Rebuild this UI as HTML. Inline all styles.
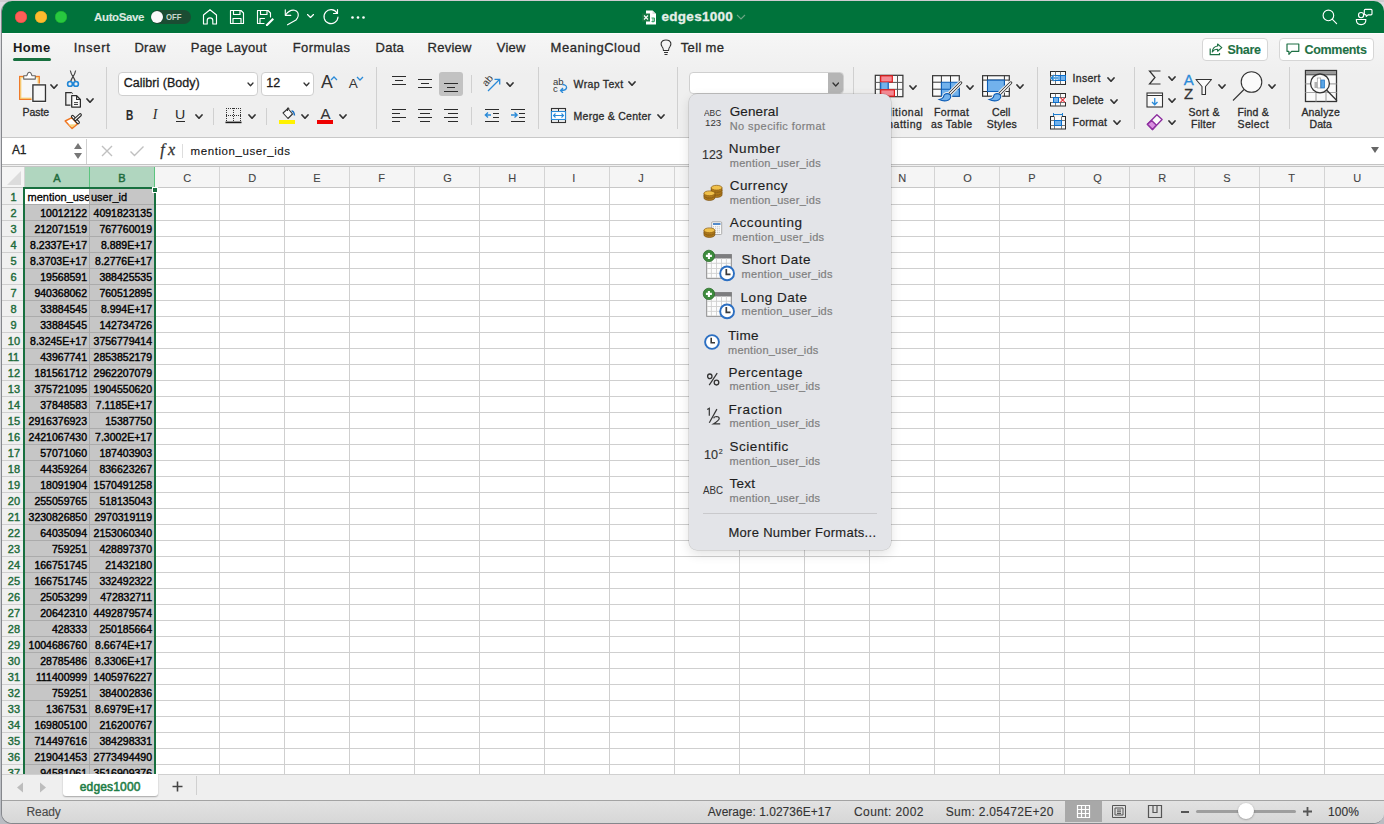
<!DOCTYPE html><html><head><meta charset='utf-8'><style>
*{margin:0;padding:0;box-sizing:border-box}
html,body{width:1384px;height:824px;overflow:hidden;background:#dedee0;font-family:"Liberation Sans",sans-serif}
.a{position:absolute}
.t{position:absolute;white-space:nowrap;line-height:1;-webkit-text-stroke:0.3px currentColor}

#win{position:absolute;left:0;top:0;width:1384px;height:824px;clip-path:inset(1px 0 1px 2px round 10px);background:#f0f0f0;border:none}
</style></head><body>
<div class='a' style='left:0;top:0;width:1384px;height:824px;background:linear-gradient(#dcdce0 0%,#d6d7db 60%,#b9bcc2 100%)'></div>
<div class='a' style='left:0;top:0;width:1384px;height:2px;background:#cfccd0'></div>
<div class='a' style='left:0;top:0;width:1384px;height:824px;clip-path:inset(1px 0 0 1px round 11px);background:#85878c'></div>

<div id='win'>

<div class='a' style='left:0;top:0;width:1384px;height:33px;background:#00733b'></div>
<div class='a' style='left:15px;top:11px;width:12px;height:12px;border-radius:6px;background:#fe5f57;box-shadow:inset 0 0 0 0.5px #e0443e'></div>
<div class='a' style='left:35px;top:11px;width:12px;height:12px;border-radius:6px;background:#febc2e;box-shadow:inset 0 0 0 0.5px #dea123'></div>
<div class='a' style='left:55px;top:11px;width:12px;height:12px;border-radius:6px;background:#28c840;box-shadow:inset 0 0 0 0.5px #1aab29'></div>
<div class='t' style='left:94.10px;top:11.86px;font-size:11.5px;font-weight:bold;font-style:normal;color:#dce9e0;font-family:"Liberation Sans",sans-serif;letter-spacing:-0.392px;-webkit-text-stroke:0.1px currentColor;'>AutoSave</div>
<div class='a' style='left:150.5px;top:10px;width:40px;height:14px;border-radius:7px;background:#1b4d33'></div>
<div class='a' style='left:151px;top:11px;width:12px;height:12px;border-radius:6px;background:#fafafa;box-shadow:0 0 1px rgba(0,0,0,.5)'></div>
<div class='t' style='left:166.00px;top:13.10px;font-size:8.5px;font-weight:bold;font-style:normal;color:#c9d6cd;font-family:"Liberation Sans",sans-serif;letter-spacing:0.000px;transform:scaleX(0.9165);transform-origin:0.00px 0;-webkit-text-stroke:0px currentColor;'>OFF</div>
<svg class='a' style='left:200px;top:7px' width='20' height='20' viewBox='0 0 20 20'><path d='M3.5 17 V8 L10 2.7 L16.5 8 V17 H12.8 V13.5 Q12.8 10.8 10 10.8 Q7.2 10.8 7.2 13.5 V17 Z' fill="none" stroke="#fff" stroke-width="1.15" stroke-linecap="round" stroke-linejoin="round"/></svg>
<svg class='a' style='left:228px;top:8px' width='18' height='18' viewBox='0 0 18 18'><path d='M2.5 2.5 H13 L15.5 5 V15.5 H2.5 Z M5.5 2.5 V6.5 H12 V2.5 M5 15.5 V10.5 H13 V15.5' fill="none" stroke="#fff" stroke-width="1.15" stroke-linecap="round" stroke-linejoin="round"/></svg>
<svg class='a' style='left:255px;top:8px' width='20' height='18' viewBox='0 0 20 18'><path d='M2.5 2.5 H13 L15.5 5 V9 M9 15.5 H2.5 V2.5 M5.5 2.5 V6.5 H12 V2.5 M5 15.5 V10.5 H9.5' fill="none" stroke="#fff" stroke-width="1.15" stroke-linecap="round" stroke-linejoin="round"/><path d='M11 16.5 L17.5 10 L19 11.5 L12.5 18 H11 Z' fill='#fff'/></svg>
<svg class='a' style='left:282px;top:7px' width='20' height='20' viewBox='0 0 20 20'><path d='M3.3 2.7 V8.3 H8.8' fill="none" stroke="#fff" stroke-width="1.15" stroke-linecap="round" stroke-linejoin="round"/><path d='M3.6 8 Q7.5 2.5 12.5 3.3 Q16.8 4.3 16.2 9 Q15.8 11 14 13 L5.5 17.8' fill="none" stroke="#fff" stroke-width="1.15" stroke-linecap="round" stroke-linejoin="round"/></svg>
<svg class='a' style='left:306px;top:13px' width='9' height='7' viewBox='0 0 9 7'><path d='M1.5 1.5 L4.5 4.5 L7.5 1.5' fill="none" stroke="#fff" stroke-width="1.15" stroke-linecap="round" stroke-linejoin="round"/></svg>
<svg class='a' style='left:321px;top:7px' width='20' height='20' viewBox='0 0 20 20'><path d='M16 6 A7 7 0 1 0 17 10 M16.5 2.5 V6.5 H12.5' fill="none" stroke="#fff" stroke-width="1.15" stroke-linecap="round" stroke-linejoin="round"/></svg>
<svg class='a' style='left:350px;top:15px' width='16' height='5' viewBox='0 0 16 5'><circle cx='2.5' cy='2.5' r='1.3' fill='#fff'/><circle cx='8' cy='2.5' r='1.3' fill='#fff'/><circle cx='13.5' cy='2.5' r='1.3' fill='#fff'/></svg>
<svg class='a' style='left:642px;top:10px' width='16' height='15' viewBox='0 0 16 15'><path d='M4 0.5 H10.5 L14 4 V14.5 H4 Z' fill='#fff'/><path d='M10.5 0.5 V4 H14' fill='#ddd'/><rect x='0' y='3.5' width='8' height='8' fill='#1a7a45'/><path d='M2 5.5 L6 9.5 M6 5.5 L2 9.5' stroke='#fff' stroke-width='1.1'/><path d='M9.5 8 H12.5 V11.5 H9.5 M11 8 V12.5' stroke='#3aa66a' stroke-width='1' fill='none'/></svg>
<div class='t' style='left:661.50px;top:10.27px;font-size:13.5px;font-weight:bold;font-style:normal;color:#e6efe9;font-family:"Liberation Sans",sans-serif;letter-spacing:0.282px;'>edges1000</div>
<svg class='a' style='left:736px;top:14px' width='10' height='6' viewBox='0 0 10 6'><path d='M1 1 L5 5 L9 1' fill='none' stroke='#6aa583' stroke-width='1.1'/></svg>
<svg class='a' style='left:1320px;top:7px' width='20' height='20' viewBox='0 0 20 20'><circle cx='8.4' cy='8.4' r='5.3' fill="none" stroke="#fff" stroke-width="1.15" stroke-linecap="round" stroke-linejoin="round"/><path d='M12.2 12.2 L16.6 16.6' fill="none" stroke="#fff" stroke-width="1.15" stroke-linecap="round" stroke-linejoin="round"/></svg>
<svg class='a' style='left:1352px;top:7px' width='24' height='20' viewBox='0 0 24 20'><circle cx='9.1' cy='8.1' r='2.6' fill="none" stroke="#fff" stroke-width="1.15" stroke-linecap="round" stroke-linejoin="round"/><path d='M4.3 12.5 H13.9 Q13.9 17.6 9.1 17.6 Q4.3 17.6 4.3 12.5 Z' fill="none" stroke="#fff" stroke-width="1.15" stroke-linecap="round" stroke-linejoin="round"/><path d='M13.3 2.3 H19 Q20 2.3 20 3.3 V6.8 Q20 7.8 19 7.8 H16 L14.3 9.4 L14 7.8 Q12.3 7.8 12.3 6.8 V3.3 Q12.3 2.3 13.3 2.3 Z' fill="none" stroke="#fff" stroke-width="1.15" stroke-linecap="round" stroke-linejoin="round"/></svg>

<div class='a' style='left:0;top:33px;width:1384px;height:104px;background:linear-gradient(#f6f6f6,#efefef 40%,#efefef)'></div><div class='a' style='left:0;top:33px;width:1384px;height:1px;background:#fdfdfd'></div><div class='t' style='left:13.00px;top:40.99px;font-size:13px;font-weight:bold;font-style:normal;color:#1a1a1a;font-family:"Liberation Sans",sans-serif;letter-spacing:0.371px;-webkit-text-stroke:0px currentColor;'>Home</div><div class='a' style='left:13px;top:58px;width:38px;height:3px;border-radius:1.5px;background:#17703f'></div><div class='t' style='left:73.70px;top:40.99px;font-size:13px;font-weight:normal;font-style:normal;color:#2a2a2a;font-family:"Liberation Sans",sans-serif;letter-spacing:0.740px;'>Insert</div><div class='t' style='left:134.40px;top:40.99px;font-size:13px;font-weight:normal;font-style:normal;color:#2a2a2a;font-family:"Liberation Sans",sans-serif;letter-spacing:0.284px;'>Draw</div><div class='t' style='left:190.80px;top:40.99px;font-size:13px;font-weight:normal;font-style:normal;color:#2a2a2a;font-family:"Liberation Sans",sans-serif;letter-spacing:0.281px;'>Page Layout</div><div class='t' style='left:292.70px;top:40.99px;font-size:13px;font-weight:normal;font-style:normal;color:#2a2a2a;font-family:"Liberation Sans",sans-serif;letter-spacing:0.446px;'>Formulas</div><div class='t' style='left:375.50px;top:40.99px;font-size:13px;font-weight:normal;font-style:normal;color:#2a2a2a;font-family:"Liberation Sans",sans-serif;letter-spacing:0.257px;'>Data</div><div class='t' style='left:427.60px;top:40.99px;font-size:13px;font-weight:normal;font-style:normal;color:#2a2a2a;font-family:"Liberation Sans",sans-serif;letter-spacing:0.233px;'>Review</div><div class='t' style='left:496.70px;top:40.99px;font-size:13px;font-weight:normal;font-style:normal;color:#2a2a2a;font-family:"Liberation Sans",sans-serif;letter-spacing:0.282px;'>View</div><div class='t' style='left:550.60px;top:40.99px;font-size:13px;font-weight:normal;font-style:normal;color:#2a2a2a;font-family:"Liberation Sans",sans-serif;letter-spacing:0.527px;'>MeaningCloud</div><svg class='a' style='left:659px;top:39px' width='14' height='17' viewBox='0 0 14 17'><path d='M4.5 11.5 Q4.5 9.5 3 7.5 Q1.8 5.8 2.2 4 Q3 1 7 1 Q11 1 11.8 4 Q12.2 5.8 11 7.5 Q9.5 9.5 9.5 11.5 Z M5 13.5 H9 M5.5 15.5 H8.5' fill='none' stroke='#333' stroke-width='1.1'/></svg><div class='t' style='left:680.70px;top:40.99px;font-size:13px;font-weight:normal;font-style:normal;color:#2a2a2a;font-family:"Liberation Sans",sans-serif;letter-spacing:0.359px;'>Tell me</div><div class='a' style='left:1201.5px;top:37.5px;width:66px;height:23px;border-radius:4px;background:#fff;border:1px solid #d6d6d6'></div><svg class='a' style='left:1209px;top:43px' width='14' height='13' viewBox='0 0 14 13'><path d='M8.6 1 L12.8 4.6 L8.6 8.2 V6.3 Q5 6.2 3.3 9 Q3.6 3.6 8.6 3 Z' fill='none' stroke='#1e7145' stroke-width='1.15' stroke-linejoin='round'/><path d='M1.2 5.5 V11.6 H10.5 V10' fill='none' stroke='#1e7145' stroke-width='1.2'/></svg><div class='t' style='left:1227.50px;top:43.92px;font-size:12.5px;font-weight:bold;font-style:normal;color:#1e7145;font-family:"Liberation Sans",sans-serif;letter-spacing:-0.322px;-webkit-text-stroke:0.1px currentColor;'>Share</div><div class='a' style='left:1278.5px;top:37.5px;width:95px;height:23px;border-radius:4px;background:#fff;border:1px solid #d6d6d6'></div><svg class='a' style='left:1286px;top:43px' width='14' height='13' viewBox='0 0 14 13'><path d='M1 1 H12.8 V8.3 H5.6 L2.9 11.3 V8.3 H1 Z' fill='none' stroke='#1e7145' stroke-width='1.2' stroke-linejoin='round'/></svg><div class='t' style='left:1304.60px;top:43.92px;font-size:12.5px;font-weight:bold;font-style:normal;color:#1e7145;font-family:"Liberation Sans",sans-serif;letter-spacing:-0.335px;-webkit-text-stroke:0.1px currentColor;'>Comments</div>
<div class='a' style='left:0;top:137px;width:1384px;height:1px;background:#c8c8c8'></div><svg class='a' style='left:16px;top:68px' width='34' height='36' viewBox='0 0 34 36'>
<rect x='3.6' y='8.4' width='19.7' height='23' fill='#f8d57e' stroke='#ef7622' stroke-width='1.1'/>
<rect x='5.4' y='10.2' width='16.1' height='19.4' fill='#f7f7f7'/>
<path d='M7.7 11.1 V7.7 H10.9 Q11.6 4.2 13.4 4.2 Q15.2 4.2 15.9 7.7 H19.3 V11.1 Z' fill='#fff' stroke='#666' stroke-width='1.1' stroke-linejoin='round'/>
<rect x='15.6' y='15.6' width='15.2' height='19' fill='#fff'/>
<rect x='16.9' y='16.9' width='12.6' height='16.4' fill='#f7f7f7' stroke='#333' stroke-width='1.35'/>
</svg><svg class='a' style='left:50px;top:84px' width='8' height='5.300000000000001' viewBox='-1 -1 8 5.300000000000001'><path d='M0 0 L3.0 3.3000000000000003 L6 0' fill='none' stroke='#333' stroke-width='1.7' stroke-linecap='round' stroke-linejoin='round'/></svg><div class='t' style='left:22.60px;top:106.81px;font-size:10.5px;font-weight:normal;font-style:normal;color:#2b2b2b;font-family:"Liberation Sans",sans-serif;letter-spacing:-0.103px;'>Paste</div><svg class='a' style='left:62px;top:66px' width='24' height='24' viewBox='0 0 24 24'>
<path d='M8.3 4.5 Q9 8 11 10.7 Q12.5 13 13.3 15.5 M13.6 4.5 Q13 8 11 10.7 Q9.5 13 8.7 15.5' stroke='#444' stroke-width='1.2' fill='none'/>
<circle cx='8' cy='17.9' r='2.4' fill='none' stroke='#1f86d6' stroke-width='1.6'/>
<circle cx='14' cy='17.9' r='2.4' fill='none' stroke='#1f86d6' stroke-width='1.6'/>
</svg><svg class='a' style='left:62px;top:90px' width='24' height='20' viewBox='0 0 24 20'>
<path d='M9.8 2.7 H3.8 V15.2 H8.5' fill='none' stroke='#2b2b2b' stroke-width='1.25'/>
<path d='M9.8 2.7 L10.8 3.6' fill='none' stroke='#2b2b2b' stroke-width='1'/>
<path d='M9.7 5.7 H14.6 L18.4 9.5 V17.1 H9.7 Z' fill='#fafafa' stroke='#2b2b2b' stroke-width='1.25' stroke-linejoin='round'/>
<path d='M14.6 5.7 V9.5 H18.4' fill='none' stroke='#2b2b2b' stroke-width='1.1'/>
<path d='M12 12.6 H16 M12 14.5 H16' stroke='#2b2b2b' stroke-width='0.9'/>
</svg><svg class='a' style='left:86px;top:97.5px' width='8' height='5.300000000000001' viewBox='-1 -1 8 5.300000000000001'><path d='M0 0 L3.0 3.3000000000000003 L6 0' fill='none' stroke='#333' stroke-width='1.7' stroke-linecap='round' stroke-linejoin='round'/></svg><svg class='a' style='left:62px;top:110px' width='24' height='22' viewBox='0 0 24 22'>
<path d='M3.2 11 L9.9 7.7 L15.5 13.9 L10.1 18.4 Z' fill='#fff' stroke='#ef7622' stroke-width='1.5' stroke-linejoin='round'/>
<path d='M6.2 14.6 L14 14.2 L10.1 17.6 Z' fill='#f8d57e'/>
<path d='M10.6 6.6 L16.2 12.5' stroke='#2b2b2b' stroke-width='3.4' stroke-linecap='round'/>
<path d='M10.6 6.6 L16.2 12.5' stroke='#fff' stroke-width='1.2' stroke-linecap='round'/>
<path d='M13.3 9.4 L18.2 4.9' stroke='#2b2b2b' stroke-width='3.4' stroke-linecap='round'/>
<path d='M13.3 9.4 L18.2 4.9' stroke='#fff' stroke-width='1.2' stroke-linecap='round'/>
</svg><div class='a' style='left:106px;top:67px;width:1px;height:62px;background:#d0d0d0'></div><div class='a' style='left:117.5px;top:72px;width:140px;height:23.5px;background:#fff;border:1px solid #cfcfcf;border-radius:4px'></div><div class='t' style='left:123.70px;top:77.22px;font-size:12.5px;font-weight:normal;font-style:normal;color:#1a1a1a;font-family:"Liberation Sans",sans-serif;letter-spacing:0.019px;'>Calibri (Body)</div><svg class='a' style='left:247px;top:82px' width='7' height='4.75' viewBox='-1 -1 7 4.75'><path d='M0 0 L2.5 2.75 L5 0' fill='none' stroke='#333' stroke-width='1.3' stroke-linecap='round' stroke-linejoin='round'/></svg><div class='a' style='left:260.5px;top:72px;width:53px;height:23.5px;background:#fff;border:1px solid #cfcfcf;border-radius:4px'></div><div class='t' style='left:266.30px;top:77.42px;font-size:12.5px;font-weight:normal;font-style:normal;color:#1a1a1a;font-family:"Liberation Sans",sans-serif;letter-spacing:0.000px;'>12</div><svg class='a' style='left:303px;top:82px' width='7' height='4.75' viewBox='-1 -1 7 4.75'><path d='M0 0 L2.5 2.75 L5 0' fill='none' stroke='#333' stroke-width='1.3' stroke-linecap='round' stroke-linejoin='round'/></svg><div class='t' style='left:321.00px;top:74.08px;font-size:17.5px;font-weight:normal;font-style:normal;color:#333;font-family:"Liberation Sans",sans-serif;letter-spacing:0.000px;-webkit-text-stroke:0px currentColor;'>A</div><svg class='a' style='left:330px;top:76px' width='8' height='5' viewBox='0 0 8 5'><path d='M1 4 L4 1 L7 4' fill='none' stroke='#2a8ad8' stroke-width='1.3'/></svg><div class='t' style='left:348.70px;top:77.47px;font-size:13.5px;font-weight:normal;font-style:normal;color:#333;font-family:"Liberation Sans",sans-serif;letter-spacing:0.000px;-webkit-text-stroke:0px currentColor;'>A</div><svg class='a' style='left:356px;top:76px' width='8' height='5' viewBox='0 0 8 5'><path d='M1 1 L4 4 L7 1' fill='none' stroke='#2a8ad8' stroke-width='1.3'/></svg><div class='t' style='left:125.80px;top:108.05px;font-size:14px;font-weight:bold;font-style:normal;color:#2b2b2b;font-family:"Liberation Sans",sans-serif;letter-spacing:0.000px;transform:scaleX(0.7200);transform-origin:0.00px 0;-webkit-text-stroke:0.1px currentColor;'>B</div><div class='t' style='left:152.80px;top:108.05px;font-size:14px;font-weight:normal;font-style:italic;color:#2b2b2b;font-family:"Liberation Serif",sans-serif;letter-spacing:0.000px;-webkit-text-stroke:0px currentColor;'>I</div><div class='t' style='left:175.30px;top:108.17px;font-size:13.5px;font-weight:normal;font-style:normal;color:#2b2b2b;font-family:"Liberation Sans",sans-serif;letter-spacing:0.000px;transform:scaleX(1.0500);transform-origin:1.00px 0;-webkit-text-stroke:0px currentColor;'>U</div><div class='a' style='left:176px;top:121px;width:9px;height:1.2px;background:#2b2b2b'></div><svg class='a' style='left:195px;top:113.5px' width='8' height='5.300000000000001' viewBox='-1 -1 8 5.300000000000001'><path d='M0 0 L3.0 3.3000000000000003 L6 0' fill='none' stroke='#333' stroke-width='1.7' stroke-linecap='round' stroke-linejoin='round'/></svg><div class='a' style='left:213px;top:107.5px;width:1px;height:17.5px;background:#d0d0d0'></div><svg class='a' style='left:225px;top:107px' width='17' height='17' viewBox='0 0 17 17'><rect x='1' y='1' width='1' height='1' fill='#333'/><rect x='1' y='8' width='1' height='1' fill='#333'/><rect x='1' y='1' width='1' height='1' fill='#333'/><rect x='8' y='1' width='1' height='1' fill='#333'/><rect x='15' y='1' width='1' height='1' fill='#333'/><rect x='3' y='1' width='1' height='1' fill='#333'/><rect x='3' y='8' width='1' height='1' fill='#333'/><rect x='1' y='3' width='1' height='1' fill='#333'/><rect x='8' y='3' width='1' height='1' fill='#333'/><rect x='15' y='3' width='1' height='1' fill='#333'/><rect x='5' y='1' width='1' height='1' fill='#333'/><rect x='5' y='8' width='1' height='1' fill='#333'/><rect x='1' y='5' width='1' height='1' fill='#333'/><rect x='8' y='5' width='1' height='1' fill='#333'/><rect x='15' y='5' width='1' height='1' fill='#333'/><rect x='7' y='1' width='1' height='1' fill='#333'/><rect x='7' y='8' width='1' height='1' fill='#333'/><rect x='1' y='7' width='1' height='1' fill='#333'/><rect x='8' y='7' width='1' height='1' fill='#333'/><rect x='15' y='7' width='1' height='1' fill='#333'/><rect x='9' y='1' width='1' height='1' fill='#333'/><rect x='9' y='8' width='1' height='1' fill='#333'/><rect x='1' y='9' width='1' height='1' fill='#333'/><rect x='8' y='9' width='1' height='1' fill='#333'/><rect x='15' y='9' width='1' height='1' fill='#333'/><rect x='11' y='1' width='1' height='1' fill='#333'/><rect x='11' y='8' width='1' height='1' fill='#333'/><rect x='1' y='11' width='1' height='1' fill='#333'/><rect x='8' y='11' width='1' height='1' fill='#333'/><rect x='15' y='11' width='1' height='1' fill='#333'/><rect x='13' y='1' width='1' height='1' fill='#333'/><rect x='13' y='8' width='1' height='1' fill='#333'/><rect x='1' y='13' width='1' height='1' fill='#333'/><rect x='8' y='13' width='1' height='1' fill='#333'/><rect x='15' y='13' width='1' height='1' fill='#333'/><rect x='15' y='1' width='1' height='1' fill='#333'/><rect x='15' y='8' width='1' height='1' fill='#333'/><rect x='1' y='15' width='1' height='1' fill='#333'/><rect x='8' y='15' width='1' height='1' fill='#333'/><rect x='15' y='15' width='1' height='1' fill='#333'/><rect x='15' y='1' width='1' height='1' fill='#333'/><rect x='0.5' y='14.6' width='16' height='1.6' fill='#1a1a1a'/></svg><svg class='a' style='left:248px;top:113.5px' width='8' height='5.300000000000001' viewBox='-1 -1 8 5.300000000000001'><path d='M0 0 L3.0 3.3000000000000003 L6 0' fill='none' stroke='#333' stroke-width='1.7' stroke-linecap='round' stroke-linejoin='round'/></svg><div class='a' style='left:266px;top:107.5px;width:1px;height:17.5px;background:#d0d0d0'></div><svg class='a' style='left:280px;top:107px' width='16' height='18' viewBox='0 0 16 18'>
<path d='M3 6 L8 1.5 L12.5 7 L8 11.5 Z' fill='#fafafa' stroke='#333' stroke-width='1.1' stroke-linejoin='round'/>
<path d='M7.5 4 V1.2 Q8.5 0.5 9 2' fill='none' stroke='#333' stroke-width='1.1'/>
<path d='M11.5 4 Q14 4 14.5 8.5' fill='none' stroke='#1a6fc0' stroke-width='1.5'/>
</svg><div class='a' style='left:279px;top:120px;width:16px;height:4px;background:#fff200'></div><svg class='a' style='left:301px;top:113.5px' width='8' height='5.300000000000001' viewBox='-1 -1 8 5.300000000000001'><path d='M0 0 L3.0 3.3000000000000003 L6 0' fill='none' stroke='#333' stroke-width='1.7' stroke-linecap='round' stroke-linejoin='round'/></svg><div class='t' style='left:320.50px;top:106.30px;font-size:15px;font-weight:normal;font-style:normal;color:#333;font-family:"Liberation Sans",sans-serif;letter-spacing:0.000px;-webkit-text-stroke:0.1px currentColor;'>A</div><div class='a' style='left:317px;top:120px;width:16px;height:4px;background:#ee0000'></div><svg class='a' style='left:339px;top:113.5px' width='8' height='5.300000000000001' viewBox='-1 -1 8 5.300000000000001'><path d='M0 0 L3.0 3.3000000000000003 L6 0' fill='none' stroke='#333' stroke-width='1.7' stroke-linecap='round' stroke-linejoin='round'/></svg><div class='a' style='left:376px;top:67px;width:1px;height:62px;background:#d0d0d0'></div><div class='a' style='left:392px;top:76px;width:14px;height:1.3px;background:#2b2b2b'></div><div class='a' style='left:395px;top:80px;width:8px;height:1.3px;background:#2b2b2b'></div><div class='a' style='left:392px;top:84px;width:14px;height:1.3px;background:#2b2b2b'></div><div class='a' style='left:418px;top:79px;width:14px;height:1.3px;background:#2b2b2b'></div><div class='a' style='left:421px;top:83px;width:8px;height:1.3px;background:#2b2b2b'></div><div class='a' style='left:418px;top:87px;width:14px;height:1.3px;background:#2b2b2b'></div><div class='a' style='left:439px;top:72.2px;width:24px;height:23.6px;border-radius:3px;background:#c2c2c2'></div><div class='a' style='left:444px;top:83px;width:14px;height:1.3px;background:#2b2b2b'></div><div class='a' style='left:447px;top:87px;width:8px;height:1.3px;background:#2b2b2b'></div><div class='a' style='left:444px;top:91px;width:14px;height:1.3px;background:#2b2b2b'></div><div class='a' style='left:471px;top:75px;width:1px;height:18px;background:#d0d0d0'></div><svg class='a' style='left:483px;top:75px' width='19' height='17' viewBox='0 0 19 17'>
<text x='0' y='0' font-family='Liberation Sans' font-size='10' fill='#333' transform='translate(3.5 12) rotate(-50)'>ab</text>
<path d='M5 16 L16.5 4.5 M11.5 4.3 H16.7 V9.5' fill='none' stroke='#2a8ad8' stroke-width='1.3'/>
</svg><svg class='a' style='left:506px;top:81.5px' width='8' height='5.300000000000001' viewBox='-1 -1 8 5.300000000000001'><path d='M0 0 L3.0 3.3000000000000003 L6 0' fill='none' stroke='#333' stroke-width='1.7' stroke-linecap='round' stroke-linejoin='round'/></svg><div class='a' style='left:392px;top:109px;width:14px;height:1.3px;background:#2b2b2b'></div><div class='a' style='left:392px;top:113px;width:8px;height:1.3px;background:#2b2b2b'></div><div class='a' style='left:392px;top:117px;width:14px;height:1.3px;background:#2b2b2b'></div><div class='a' style='left:392px;top:121px;width:8px;height:1.3px;background:#2b2b2b'></div><div class='a' style='left:418px;top:109px;width:14px;height:1.3px;background:#2b2b2b'></div><div class='a' style='left:420px;top:113px;width:10px;height:1.3px;background:#2b2b2b'></div><div class='a' style='left:418px;top:117px;width:14px;height:1.3px;background:#2b2b2b'></div><div class='a' style='left:420px;top:121px;width:10px;height:1.3px;background:#2b2b2b'></div><div class='a' style='left:444px;top:109px;width:14px;height:1.3px;background:#2b2b2b'></div><div class='a' style='left:448px;top:113px;width:10px;height:1.3px;background:#2b2b2b'></div><div class='a' style='left:444px;top:117px;width:14px;height:1.3px;background:#2b2b2b'></div><div class='a' style='left:448px;top:121px;width:10px;height:1.3px;background:#2b2b2b'></div><div class='a' style='left:471px;top:107px;width:1px;height:18px;background:#d0d0d0'></div><div class='a' style='left:485px;top:109px;width:14px;height:1.3px;background:#2b2b2b'></div><div class='a' style='left:493px;top:113px;width:6px;height:1.3px;background:#2b2b2b'></div><div class='a' style='left:493px;top:117px;width:6px;height:1.3px;background:#2b2b2b'></div><div class='a' style='left:485px;top:121px;width:14px;height:1.3px;background:#2b2b2b'></div><svg class='a' style='left:484px;top:111px' width='8' height='8' viewBox='0 0 8 8'><path d='M7 4 H1.5 M4 1.5 L1.3 4 L4 6.5' fill='none' stroke='#2a8ad8' stroke-width='1.3'/></svg><div class='a' style='left:511px;top:109px;width:14px;height:1.3px;background:#2b2b2b'></div><div class='a' style='left:519px;top:113px;width:6px;height:1.3px;background:#2b2b2b'></div><div class='a' style='left:519px;top:117px;width:6px;height:1.3px;background:#2b2b2b'></div><div class='a' style='left:511px;top:121px;width:14px;height:1.3px;background:#2b2b2b'></div><svg class='a' style='left:510px;top:111px' width='9' height='8' viewBox='0 0 9 8'><path d='M1 4 H7 M4.5 1.5 L7.2 4 L4.5 6.5' fill='none' stroke='#2a8ad8' stroke-width='1.3'/></svg><div class='a' style='left:538px;top:67px;width:1px;height:62px;background:#d0d0d0'></div><svg class='a' style='left:552px;top:76px' width='16' height='17' viewBox='0 0 16 17'>
<text x='1' y='8.5' font-family='Liberation Sans' font-size='9.5' fill='#333'>ab</text>
<text x='1' y='15.5' font-family='Liberation Sans' font-size='9.5' fill='#333'>c</text>
<path d='M10.5 8.5 Q15 9 14.5 12 Q14 14.5 9 14.5 M11 12 L8.5 14.5 L11 17' fill='none' stroke='#2a8ad8' stroke-width='1.3'/>
</svg><div class='t' style='left:573.60px;top:78.91px;font-size:10.5px;font-weight:normal;font-style:normal;color:#2b2b2b;font-family:"Liberation Sans",sans-serif;letter-spacing:0.331px;'>Wrap Text</div><svg class='a' style='left:628px;top:81px' width='8' height='5.300000000000001' viewBox='-1 -1 8 5.300000000000001'><path d='M0 0 L3.0 3.3000000000000003 L6 0' fill='none' stroke='#333' stroke-width='1.7' stroke-linecap='round' stroke-linejoin='round'/></svg><svg class='a' style='left:550px;top:107px' width='17' height='17' viewBox='0 0 17 17'>
<rect x='1.5' y='1.5' width='14' height='14' fill='none' stroke='#333' stroke-width='1.1'/>
<path d='M8.5 1.5 V4 M8.5 13 V15.5' stroke='#333' stroke-width='1'/>
<rect x='1.5' y='4.5' width='14' height='8' fill='#fff' stroke='#2a8ad8' stroke-width='1.1'/>
<path d='M3.5 8.5 H13.5 M5.5 6.5 L3.5 8.5 L5.5 10.5 M11.5 6.5 L13.5 8.5 L11.5 10.5' fill='none' stroke='#2a8ad8' stroke-width='1.1'/>
</svg><div class='t' style='left:573.60px;top:111.11px;font-size:10.5px;font-weight:normal;font-style:normal;color:#2b2b2b;font-family:"Liberation Sans",sans-serif;letter-spacing:0.260px;'>Merge &amp; Center</div><svg class='a' style='left:657px;top:114px' width='8' height='5.300000000000001' viewBox='-1 -1 8 5.300000000000001'><path d='M0 0 L3.0 3.3000000000000003 L6 0' fill='none' stroke='#333' stroke-width='1.7' stroke-linecap='round' stroke-linejoin='round'/></svg><div class='a' style='left:677px;top:67px;width:1px;height:62px;background:#d0d0d0'></div><div class='a' style='left:688.5px;top:72.4px;width:155px;height:22px;background:#fff;border:1px solid #cfcfcf;border-radius:4px;overflow:hidden'><div style='position:absolute;right:0;top:0;width:15px;height:22px;background:#b5b5b5'></div></div><svg class='a' style='left:831.5px;top:81.5px' width='7.5' height='5.025' viewBox='-1 -1 7.5 5.025'><path d='M0 0 L2.75 3.0250000000000004 L5.5 0' fill='none' stroke='#333' stroke-width='1.3' stroke-linecap='round' stroke-linejoin='round'/></svg><div class='a' style='left:853px;top:67px;width:1px;height:62px;background:#d0d0d0'></div><svg class='a' style='left:870px;top:70px' width='40' height='30' viewBox='0 0 40 30'>
<rect x='5.3' y='5.3' width='27.6' height='21.4' fill='#fafafa' stroke='#333' stroke-width='1.2'/>
<path d='M5.3 12.4 H32.9 M5.3 19.3 H32.9 M10.2 5.3 V26.7 M27.5 5.3 V26.7' stroke='#555' stroke-width='1'/>
<rect x='10.7' y='5.8' width='11.6' height='6.2' fill='#f48a94' stroke='#e01010' stroke-width='1.1'/>
<rect x='10.2' y='12.4' width='8.5' height='6.9' fill='#72b2ec'/>
<path d='M10.7 12.4 V19.3 M18.2 12.4 V19.3' stroke='#0b5cb5' stroke-width='1.1'/>
<rect x='10.7' y='19.8' width='13.7' height='6.4' fill='#f48a94' stroke='#e01010' stroke-width='1.1'/>
</svg><svg class='a' style='left:909px;top:85px' width='8' height='5.300000000000001' viewBox='-1 -1 8 5.300000000000001'><path d='M0 0 L3.0 3.3000000000000003 L6 0' fill='none' stroke='#333' stroke-width='1.7' stroke-linecap='round' stroke-linejoin='round'/></svg><div class='t' style='left:865.00px;top:106.81px;font-size:10.5px;font-weight:normal;font-style:normal;color:#2b2b2b;font-family:"Liberation Sans",sans-serif;letter-spacing:0.530px;'>Conditional</div><div class='t' style='left:867.00px;top:118.61px;font-size:10.5px;font-weight:normal;font-style:normal;color:#2b2b2b;font-family:"Liberation Sans",sans-serif;letter-spacing:0.517px;'>Formatting</div><svg class='a' style='left:928px;top:70px' width='40' height='34' viewBox='0 0 40 34'>
<rect x='4.6' y='5.7' width='26.7' height='20.5' fill='#fafafa' stroke='#333' stroke-width='1.2'/>
<rect x='13.4' y='12.2' width='17.9' height='14' fill='#72b2ec'/>
<path d='M4.6 12.2 H13.4 M4.6 19.2 H13.4 M13.4 5.7 V12.2 M22.5 5.7 V12.2' stroke='#333' stroke-width='1'/>
<path d='M13.4 12.2 H31.3 V26.2 H13.4 Z M13.4 19.2 H31.3 M22.5 12.2 V26.2' fill='none' stroke='#0b5cb5' stroke-width='1.1'/>
<path d='M22 23.5 L32.8 12.8' stroke='#f0f0f0' stroke-width='5' stroke-linecap='round'/>
<path d='M16.5 24.4 Q19.5 22.5 22.5 25 Q23.5 28 20.5 30 Q16 32 11.2 29.5 Q14.5 29 15.5 27 Q15.8 25.3 16.5 24.4 Z' fill='#f0f0f0' stroke='#f0f0f0' stroke-width='3'/>
<path d='M22 23.5 L32.8 12.8' stroke='#333' stroke-width='3' stroke-linecap='round'/>
<path d='M22 23.5 L32.8 12.8' stroke='#fff' stroke-width='1.2' stroke-linecap='round'/>
<path d='M16.5 24.4 Q19.5 22.5 22.5 25 Q23.5 28 20.5 30 Q16 32 11.2 29.5 Q14.5 29 15.5 27 Q15.8 25.3 16.5 24.4 Z' fill='#72b2ec' stroke='#0b5cb5' stroke-width='1.1'/>
</svg><svg class='a' style='left:966px;top:85px' width='8' height='5.300000000000001' viewBox='-1 -1 8 5.300000000000001'><path d='M0 0 L3.0 3.3000000000000003 L6 0' fill='none' stroke='#333' stroke-width='1.7' stroke-linecap='round' stroke-linejoin='round'/></svg><div class='t' style='left:934.00px;top:106.81px;font-size:10.5px;font-weight:normal;font-style:normal;color:#2b2b2b;font-family:"Liberation Sans",sans-serif;letter-spacing:0.333px;'>Format</div><div class='t' style='left:931.00px;top:118.61px;font-size:10.5px;font-weight:normal;font-style:normal;color:#2b2b2b;font-family:"Liberation Sans",sans-serif;letter-spacing:0.319px;'>as Table</div><svg class='a' style='left:978px;top:70px' width='40' height='34' viewBox='0 0 40 34'>
<rect x='4.6' y='5.7' width='26.7' height='20.5' fill='#fafafa' stroke='#333' stroke-width='1.2'/>
<path d='M4.6 10.1 H31.3 M4.6 21.5 H31.3 M9.5 5.7 V26.2 M26.4 5.7 V26.2' stroke='#333' stroke-width='1'/>
<rect x='9.5' y='10.1' width='16.9' height='11.4' fill='#72b2ec' stroke='#0b5cb5' stroke-width='1.1'/>
<path d='M22 23.5 L32.8 12.8' stroke='#f0f0f0' stroke-width='5' stroke-linecap='round'/>
<path d='M16.5 24.4 Q19.5 22.5 22.5 25 Q23.5 28 20.5 30 Q16 32 11.2 29.5 Q14.5 29 15.5 27 Q15.8 25.3 16.5 24.4 Z' fill='#f0f0f0' stroke='#f0f0f0' stroke-width='3'/>
<path d='M22 23.5 L32.8 12.8' stroke='#333' stroke-width='3' stroke-linecap='round'/>
<path d='M22 23.5 L32.8 12.8' stroke='#fff' stroke-width='1.2' stroke-linecap='round'/>
<path d='M16.5 24.4 Q19.5 22.5 22.5 25 Q23.5 28 20.5 30 Q16 32 11.2 29.5 Q14.5 29 15.5 27 Q15.8 25.3 16.5 24.4 Z' fill='#72b2ec' stroke='#0b5cb5' stroke-width='1.1'/>
</svg><svg class='a' style='left:1016px;top:84px' width='8' height='5.300000000000001' viewBox='-1 -1 8 5.300000000000001'><path d='M0 0 L3.0 3.3000000000000003 L6 0' fill='none' stroke='#333' stroke-width='1.7' stroke-linecap='round' stroke-linejoin='round'/></svg><div class='t' style='left:992.00px;top:106.81px;font-size:10.5px;font-weight:normal;font-style:normal;color:#2b2b2b;font-family:"Liberation Sans",sans-serif;letter-spacing:0.082px;'>Cell</div><div class='t' style='left:986.70px;top:118.61px;font-size:10.5px;font-weight:normal;font-style:normal;color:#2b2b2b;font-family:"Liberation Sans",sans-serif;letter-spacing:0.311px;'>Styles</div><div class='a' style='left:1036.5px;top:67px;width:1px;height:62px;background:#d0d0d0'></div><svg class='a' style='left:1046px;top:68px' width='24' height='64' viewBox='0 0 24 64'>
<rect x='4.5' y='3.5' width='15' height='13' fill='#fafafa' stroke='#2b2b2b' stroke-width='1'/>
<path d='M4.5 7.5 H19.5 M4.5 12.5 H19.5 M9.5 3.5 V16.5 M14.5 3.5 V16.5' stroke='#555' stroke-width='0.8'/>
<rect x='9.5' y='7.5' width='10' height='5' fill='#72b2ec' stroke='#0b6fcc' stroke-width='1'/>
<path d='M14.5 7.5 V12.5' stroke='#0b5cb5' stroke-width='0.8'/>
<path d='M4.5 10 H12' stroke='#fafafa' stroke-width='3'/>
<path d='M5.3 10 H12 M8.3 6.9 L5.2 10 L8.3 13.1' fill='none' stroke='#2a8ad8' stroke-width='1.4'/>
<rect x='4.5' y='25.5' width='15' height='12.5' fill='#fafafa' stroke='#2b2b2b' stroke-width='1'/>
<path d='M4.5 29.5 H19.5 M4.5 34.5 H19.5 M9.5 25.5 V38 M14.5 25.5 V38' stroke='#555' stroke-width='0.8'/>
<path d='M4.5 30 V34 M19.5 30 V34' stroke='#efefef' stroke-width='1.4'/>
<rect x='13.5' y='30' width='6.5' height='4' fill='#fafafa'/>
<rect x='7.5' y='29.5' width='5' height='5' fill='#72b2ec' stroke='#0b6fcc' stroke-width='1'/>
<path d='M14.6 29.8 L18.8 34.2 M18.8 29.8 L14.6 34.2' stroke='#e8303a' stroke-width='1.2'/>
<path d='M7 46.5 H17 M7.5 45 V48 M16.5 45 V48' stroke='#1f7fd0' stroke-width='1'/>
<rect x='4.5' y='48.5' width='15' height='12.5' fill='#fafafa' stroke='#2b2b2b' stroke-width='1'/>
<path d='M8 48.5 H16' stroke='#efefef' stroke-width='1.2'/>
<path d='M4.5 52.5 H19.5 M4.5 57.5 H19.5 M8.5 52.5 V61 M15.5 52.5 V61 M8.5 48.5 V52.5 M15.5 48.5 V52.5' stroke='#555' stroke-width='0.8'/>
<rect x='8.5' y='52.5' width='7' height='5' fill='#72b2ec' stroke='#0b6fcc' stroke-width='1'/>
</svg><div class='t' style='left:1072.50px;top:73.11px;font-size:10.5px;font-weight:normal;font-style:normal;color:#2b2b2b;font-family:"Liberation Sans",sans-serif;letter-spacing:0.311px;'>Insert</div><svg class='a' style='left:1107px;top:76.5px' width='8' height='5.300000000000001' viewBox='-1 -1 8 5.300000000000001'><path d='M0 0 L3.0 3.3000000000000003 L6 0' fill='none' stroke='#333' stroke-width='1.7' stroke-linecap='round' stroke-linejoin='round'/></svg><div class='t' style='left:1072.50px;top:95.01px;font-size:10.5px;font-weight:normal;font-style:normal;color:#2b2b2b;font-family:"Liberation Sans",sans-serif;letter-spacing:0.138px;'>Delete</div><svg class='a' style='left:1110px;top:98.5px' width='8' height='5.300000000000001' viewBox='-1 -1 8 5.300000000000001'><path d='M0 0 L3.0 3.3000000000000003 L6 0' fill='none' stroke='#333' stroke-width='1.7' stroke-linecap='round' stroke-linejoin='round'/></svg><div class='t' style='left:1072.50px;top:116.81px;font-size:10.5px;font-weight:normal;font-style:normal;color:#2b2b2b;font-family:"Liberation Sans",sans-serif;letter-spacing:0.233px;'>Format</div><svg class='a' style='left:1113px;top:120px' width='8' height='5.300000000000001' viewBox='-1 -1 8 5.300000000000001'><path d='M0 0 L3.0 3.3000000000000003 L6 0' fill='none' stroke='#333' stroke-width='1.7' stroke-linecap='round' stroke-linejoin='round'/></svg><div class='a' style='left:1133.5px;top:67px;width:1px;height:62px;background:#d0d0d0'></div><svg class='a' style='left:1148px;top:70px' width='14' height='15' viewBox='0 0 14 15'><path d='M12.5 1 H1.5 L7 7.5 L1.5 14 H12.5' fill='none' stroke='#333' stroke-width='1.2'/></svg><svg class='a' style='left:1168px;top:76px' width='8' height='5.300000000000001' viewBox='-1 -1 8 5.300000000000001'><path d='M0 0 L3.0 3.3000000000000003 L6 0' fill='none' stroke='#333' stroke-width='1.7' stroke-linecap='round' stroke-linejoin='round'/></svg><svg class='a' style='left:1146px;top:92px' width='18' height='16' viewBox='0 0 18 16'>
<rect x='1' y='1' width='15.5' height='14' fill='#fafafa' stroke='#333' stroke-width='1.1'/>
<path d='M1 3.5 H16.5' stroke='#333' stroke-width='1'/>
<path d='M8.75 6 V12.5 M6 10 L8.75 12.8 L11.5 10' fill='none' stroke='#2a8ad8' stroke-width='1.3'/>
</svg><svg class='a' style='left:1168px;top:97.5px' width='8' height='5.300000000000001' viewBox='-1 -1 8 5.300000000000001'><path d='M0 0 L3.0 3.3000000000000003 L6 0' fill='none' stroke='#333' stroke-width='1.7' stroke-linecap='round' stroke-linejoin='round'/></svg><svg class='a' style='left:1142px;top:110px' width='24' height='24' viewBox='0 0 24 24'>
<path d='M5.4 14.3 L14.9 4.7 L20.1 9.6 L10.5 19.5 Z' fill='#fafafa' stroke='#8e2fa0' stroke-width='1.4' stroke-linejoin='round'/>
<path d='M5.4 14.3 L9.6 10.6 L14.3 15.1 L10.5 19.5 Z' fill='#d98ee0' stroke='#8e2fa0' stroke-width='1.4' stroke-linejoin='round'/>
</svg><svg class='a' style='left:1168px;top:119.5px' width='8' height='5.300000000000001' viewBox='-1 -1 8 5.300000000000001'><path d='M0 0 L3.0 3.3000000000000003 L6 0' fill='none' stroke='#333' stroke-width='1.7' stroke-linecap='round' stroke-linejoin='round'/></svg><div class='t' style='left:1183.80px;top:71.80px;font-size:15px;font-weight:normal;font-style:normal;color:#2a8ad8;font-family:"Liberation Sans",sans-serif;letter-spacing:0.000px;'>A</div><div class='t' style='left:1184.00px;top:86.30px;font-size:15px;font-weight:normal;font-style:normal;color:#333;font-family:"Liberation Sans",sans-serif;letter-spacing:0.000px;'>Z</div><svg class='a' style='left:1195px;top:78px' width='18' height='18' viewBox='0 0 18 18'><path d='M1 1.5 H16.5 L10.5 8.5 V16.5 H7 V8.5 Z' fill='#fafafa' stroke='#333' stroke-width='1.1' stroke-linejoin='round'/></svg><svg class='a' style='left:1218px;top:83.5px' width='8' height='5.300000000000001' viewBox='-1 -1 8 5.300000000000001'><path d='M0 0 L3.0 3.3000000000000003 L6 0' fill='none' stroke='#333' stroke-width='1.7' stroke-linecap='round' stroke-linejoin='round'/></svg><div class='t' style='left:1188.40px;top:106.91px;font-size:10.5px;font-weight:normal;font-style:normal;color:#2b2b2b;font-family:"Liberation Sans",sans-serif;letter-spacing:0.405px;'>Sort &amp;</div><div class='t' style='left:1191.00px;top:119.11px;font-size:10.5px;font-weight:normal;font-style:normal;color:#2b2b2b;font-family:"Liberation Sans",sans-serif;letter-spacing:0.233px;'>Filter</div><svg class='a' style='left:1232px;top:71px' width='32' height='31' viewBox='0 0 32 31'>
<circle cx='19.5' cy='11' r='10.3' fill='#fafafa' stroke='#333' stroke-width='1.1'/>
<path d='M12 18.5 L1 29.5' stroke='#333' stroke-width='1.1'/>
</svg><svg class='a' style='left:1268px;top:83.5px' width='8' height='5.300000000000001' viewBox='-1 -1 8 5.300000000000001'><path d='M0 0 L3.0 3.3000000000000003 L6 0' fill='none' stroke='#333' stroke-width='1.7' stroke-linecap='round' stroke-linejoin='round'/></svg><div class='t' style='left:1237.50px;top:106.91px;font-size:10.5px;font-weight:normal;font-style:normal;color:#2b2b2b;font-family:"Liberation Sans",sans-serif;letter-spacing:0.171px;'>Find &amp;</div><div class='t' style='left:1237.50px;top:119.11px;font-size:10.5px;font-weight:normal;font-style:normal;color:#2b2b2b;font-family:"Liberation Sans",sans-serif;letter-spacing:0.387px;'>Select</div><div class='a' style='left:1288.5px;top:67px;width:1px;height:62px;background:#d0d0d0'></div><svg class='a' style='left:1304px;top:69px' width='34' height='34' viewBox='0 0 34 34'>
<rect x='1.5' y='1.5' width='31' height='31' fill='#fafafa' stroke='#333' stroke-width='1.3'/>
<rect x='2' y='2' width='30' height='3.8' fill='#9a9a9a'/>
<path d='M1.5 5.8 H32.5' stroke='#444' stroke-width='1'/>
<path d='M1.5 14.8 H32.5 M1.5 23.5 H32.5 M12 5.8 V32.5 M22 5.8 V32.5' stroke='#a8a8a8' stroke-width='1.2'/>
<circle cx='16' cy='14.4' r='9.4' fill='#fafafa' stroke='#333' stroke-width='1.3'/>
<rect x='10.5' y='13' width='2.8' height='6' fill='#b0b0b0'/>
<rect x='13.3' y='9' width='3.4' height='10' fill='#fff' stroke='#999' stroke-width='0.7'/>
<rect x='16.9' y='11' width='3.6' height='8' fill='#5aa5e6' stroke='#1a6fc0' stroke-width='0.7'/>
<path d='M22.8 21.2 L33 31.8' stroke='#333' stroke-width='1.3'/>
</svg><div class='t' style='left:1301.40px;top:106.81px;font-size:10.5px;font-weight:normal;font-style:normal;color:#2b2b2b;font-family:"Liberation Sans",sans-serif;letter-spacing:0.181px;'>Analyze</div><div class='t' style='left:1309.60px;top:118.61px;font-size:10.5px;font-weight:normal;font-style:normal;color:#2b2b2b;font-family:"Liberation Sans",sans-serif;letter-spacing:-0.013px;'>Data</div>

<div class='a' style='left:0;top:138px;width:1384px;height:26px;background:#fff'></div>
<div class='a' style='left:0;top:164px;width:1384px;height:1px;background:#c4c4c4'></div>
<div class='a' style='left:0;top:166px;width:1384px;height:1px;background:#c4c4c4'></div>
<div class='a' style='left:86px;top:139px;width:1px;height:25px;background:#d0d0d0'></div>
<div class='t' style='left:12.00px;top:144.44px;font-size:12px;font-weight:normal;font-style:normal;color:#222;font-family:"Liberation Sans",sans-serif;letter-spacing:-0.304px;'>A1</div>
<svg class='a' style='left:73px;top:141px' width='10' height='20' viewBox='0 0 10 20'><path d='M5 2 L9 8 H1 Z M5 18 L9 12 H1 Z' fill='#777'/></svg>
<svg class='a' style='left:100px;top:144px' width='14' height='14' viewBox='0 0 14 14'><path d='M2 2 L12 12 M12 2 L2 12' stroke='#c0c0c0' stroke-width='1.4'/></svg>
<svg class='a' style='left:129px;top:144px' width='16' height='14' viewBox='0 0 16 14'><path d='M1.5 7.5 L5.5 11.5 L14.5 2.5' fill='none' stroke='#c0c0c0' stroke-width='1.4'/></svg>
<div class='t' style='left:160.30px;top:141.95px;font-size:16px;font-weight:normal;font-style:italic;color:#333;font-family:"Liberation Serif",sans-serif;letter-spacing:3.255px;'>fx</div>
<div class='a' style='left:182px;top:144px;width:1px;height:14px;background:#ddd'></div>
<div class='t' style='left:190.60px;top:146.16px;font-size:11.5px;font-weight:normal;font-style:normal;color:#111;font-family:"Liberation Sans",sans-serif;letter-spacing:0.578px;-webkit-text-stroke:0.1px currentColor;'>mention_user_ids</div>
<svg class='a' style='left:1370px;top:146px' width='10' height='8' viewBox='0 0 10 8'><path d='M1 1 H9 L5 7 Z' fill='#666'/></svg>

<div class='a' style='left:0;top:167px;width:1384px;height:607px;background:#fff'></div><div class='a' style='left:2px;top:167px;width:1382px;height:21px;background:#f5f5f5'></div><div class='a' style='left:2px;top:188px;width:22px;height:586px;background:#f0f0f0'></div><svg class='a' style='left:5px;top:170px' width='17' height='16' viewBox='0 0 17 16'><path d='M16 1 V15 H2 Z' fill='#dcdcdc'/></svg><div class='a' style='left:25px;top:167px;width:130px;height:20px;background:#b0d6bf'></div><div class='t' style='left:53.20px;top:172.59px;font-size:11px;font-weight:normal;font-style:normal;color:#1e6b3d;font-family:"Liberation Sans",sans-serif;letter-spacing:0.000px;-webkit-text-stroke:0.45px currentColor;'>A</div><div class='a' style='left:24px;top:167px;width:1px;height:21px;background:#d4d4d4'></div><div class='t' style='left:118.20px;top:172.59px;font-size:11px;font-weight:normal;font-style:normal;color:#1e6b3d;font-family:"Liberation Sans",sans-serif;letter-spacing:0.000px;-webkit-text-stroke:0.45px currentColor;'>B</div><div class='a' style='left:89px;top:167px;width:1px;height:21px;background:#5cc47f'></div><div class='t' style='left:183.20px;top:172.59px;font-size:11px;font-weight:normal;font-style:normal;color:#444;font-family:"Liberation Sans",sans-serif;letter-spacing:0.000px;-webkit-text-stroke:0.1px currentColor;'>C</div><div class='a' style='left:154px;top:167px;width:1px;height:21px;background:#5cc47f'></div><div class='t' style='left:248.20px;top:172.59px;font-size:11px;font-weight:normal;font-style:normal;color:#444;font-family:"Liberation Sans",sans-serif;letter-spacing:0.000px;-webkit-text-stroke:0.1px currentColor;'>D</div><div class='a' style='left:219px;top:167px;width:1px;height:21px;background:#d4d4d4'></div><div class='t' style='left:313.20px;top:172.59px;font-size:11px;font-weight:normal;font-style:normal;color:#444;font-family:"Liberation Sans",sans-serif;letter-spacing:0.000px;-webkit-text-stroke:0.1px currentColor;'>E</div><div class='a' style='left:284px;top:167px;width:1px;height:21px;background:#d4d4d4'></div><div class='t' style='left:378.20px;top:172.59px;font-size:11px;font-weight:normal;font-style:normal;color:#444;font-family:"Liberation Sans",sans-serif;letter-spacing:0.000px;-webkit-text-stroke:0.1px currentColor;'>F</div><div class='a' style='left:349px;top:167px;width:1px;height:21px;background:#d4d4d4'></div><div class='t' style='left:443.20px;top:172.59px;font-size:11px;font-weight:normal;font-style:normal;color:#444;font-family:"Liberation Sans",sans-serif;letter-spacing:0.000px;-webkit-text-stroke:0.1px currentColor;'>G</div><div class='a' style='left:414px;top:167px;width:1px;height:21px;background:#d4d4d4'></div><div class='t' style='left:508.20px;top:172.59px;font-size:11px;font-weight:normal;font-style:normal;color:#444;font-family:"Liberation Sans",sans-serif;letter-spacing:0.000px;-webkit-text-stroke:0.1px currentColor;'>H</div><div class='a' style='left:479px;top:167px;width:1px;height:21px;background:#d4d4d4'></div><div class='t' style='left:572.20px;top:172.59px;font-size:11px;font-weight:normal;font-style:normal;color:#444;font-family:"Liberation Sans",sans-serif;letter-spacing:0.000px;-webkit-text-stroke:0.1px currentColor;'>I</div><div class='a' style='left:544px;top:167px;width:1px;height:21px;background:#d4d4d4'></div><div class='t' style='left:638.20px;top:172.59px;font-size:11px;font-weight:normal;font-style:normal;color:#444;font-family:"Liberation Sans",sans-serif;letter-spacing:0.000px;-webkit-text-stroke:0.1px currentColor;'>J</div><div class='a' style='left:609px;top:167px;width:1px;height:21px;background:#d4d4d4'></div><div class='t' style='left:703.20px;top:172.59px;font-size:11px;font-weight:normal;font-style:normal;color:#444;font-family:"Liberation Sans",sans-serif;letter-spacing:0.000px;-webkit-text-stroke:0.1px currentColor;'>K</div><div class='a' style='left:674px;top:167px;width:1px;height:21px;background:#d4d4d4'></div><div class='t' style='left:768.20px;top:172.59px;font-size:11px;font-weight:normal;font-style:normal;color:#444;font-family:"Liberation Sans",sans-serif;letter-spacing:0.000px;-webkit-text-stroke:0.1px currentColor;'>L</div><div class='a' style='left:739px;top:167px;width:1px;height:21px;background:#d4d4d4'></div><div class='t' style='left:833.20px;top:172.59px;font-size:11px;font-weight:normal;font-style:normal;color:#444;font-family:"Liberation Sans",sans-serif;letter-spacing:0.000px;-webkit-text-stroke:0.1px currentColor;'>M</div><div class='a' style='left:804px;top:167px;width:1px;height:21px;background:#d4d4d4'></div><div class='t' style='left:898.20px;top:172.59px;font-size:11px;font-weight:normal;font-style:normal;color:#444;font-family:"Liberation Sans",sans-serif;letter-spacing:0.000px;-webkit-text-stroke:0.1px currentColor;'>N</div><div class='a' style='left:869px;top:167px;width:1px;height:21px;background:#d4d4d4'></div><div class='t' style='left:963.20px;top:172.59px;font-size:11px;font-weight:normal;font-style:normal;color:#444;font-family:"Liberation Sans",sans-serif;letter-spacing:0.000px;-webkit-text-stroke:0.1px currentColor;'>O</div><div class='a' style='left:934px;top:167px;width:1px;height:21px;background:#d4d4d4'></div><div class='t' style='left:1028.20px;top:172.59px;font-size:11px;font-weight:normal;font-style:normal;color:#444;font-family:"Liberation Sans",sans-serif;letter-spacing:0.000px;-webkit-text-stroke:0.1px currentColor;'>P</div><div class='a' style='left:999px;top:167px;width:1px;height:21px;background:#d4d4d4'></div><div class='t' style='left:1093.20px;top:172.59px;font-size:11px;font-weight:normal;font-style:normal;color:#444;font-family:"Liberation Sans",sans-serif;letter-spacing:0.000px;-webkit-text-stroke:0.1px currentColor;'>Q</div><div class='a' style='left:1064px;top:167px;width:1px;height:21px;background:#d4d4d4'></div><div class='t' style='left:1158.20px;top:172.59px;font-size:11px;font-weight:normal;font-style:normal;color:#444;font-family:"Liberation Sans",sans-serif;letter-spacing:0.000px;-webkit-text-stroke:0.1px currentColor;'>R</div><div class='a' style='left:1129px;top:167px;width:1px;height:21px;background:#d4d4d4'></div><div class='t' style='left:1223.20px;top:172.59px;font-size:11px;font-weight:normal;font-style:normal;color:#444;font-family:"Liberation Sans",sans-serif;letter-spacing:0.000px;-webkit-text-stroke:0.1px currentColor;'>S</div><div class='a' style='left:1194px;top:167px;width:1px;height:21px;background:#d4d4d4'></div><div class='t' style='left:1288.20px;top:172.59px;font-size:11px;font-weight:normal;font-style:normal;color:#444;font-family:"Liberation Sans",sans-serif;letter-spacing:0.000px;-webkit-text-stroke:0.1px currentColor;'>T</div><div class='a' style='left:1259px;top:167px;width:1px;height:21px;background:#d4d4d4'></div><div class='t' style='left:1353.20px;top:172.59px;font-size:11px;font-weight:normal;font-style:normal;color:#444;font-family:"Liberation Sans",sans-serif;letter-spacing:0.000px;-webkit-text-stroke:0.1px currentColor;'>U</div><div class='a' style='left:1324px;top:167px;width:1px;height:21px;background:#d4d4d4'></div><div class='a' style='left:2px;top:187px;width:1382px;height:1px;background:#c8c8c8'></div><div class='a' style='left:89px;top:188px;width:1px;height:586px;background:#cfcfcf'></div><div class='a' style='left:154px;top:188px;width:1px;height:586px;background:#cfcfcf'></div><div class='a' style='left:219px;top:188px;width:1px;height:586px;background:#cfcfcf'></div><div class='a' style='left:284px;top:188px;width:1px;height:586px;background:#cfcfcf'></div><div class='a' style='left:349px;top:188px;width:1px;height:586px;background:#cfcfcf'></div><div class='a' style='left:414px;top:188px;width:1px;height:586px;background:#cfcfcf'></div><div class='a' style='left:479px;top:188px;width:1px;height:586px;background:#cfcfcf'></div><div class='a' style='left:544px;top:188px;width:1px;height:586px;background:#cfcfcf'></div><div class='a' style='left:609px;top:188px;width:1px;height:586px;background:#cfcfcf'></div><div class='a' style='left:674px;top:188px;width:1px;height:586px;background:#cfcfcf'></div><div class='a' style='left:739px;top:188px;width:1px;height:586px;background:#cfcfcf'></div><div class='a' style='left:804px;top:188px;width:1px;height:586px;background:#cfcfcf'></div><div class='a' style='left:869px;top:188px;width:1px;height:586px;background:#cfcfcf'></div><div class='a' style='left:934px;top:188px;width:1px;height:586px;background:#cfcfcf'></div><div class='a' style='left:999px;top:188px;width:1px;height:586px;background:#cfcfcf'></div><div class='a' style='left:1064px;top:188px;width:1px;height:586px;background:#cfcfcf'></div><div class='a' style='left:1129px;top:188px;width:1px;height:586px;background:#cfcfcf'></div><div class='a' style='left:1194px;top:188px;width:1px;height:586px;background:#cfcfcf'></div><div class='a' style='left:1259px;top:188px;width:1px;height:586px;background:#cfcfcf'></div><div class='a' style='left:1324px;top:188px;width:1px;height:586px;background:#cfcfcf'></div><div class='a' style='left:1389px;top:188px;width:1px;height:586px;background:#cfcfcf'></div><div class='a' style='left:2px;top:204px;width:1382px;height:1px;background:#cfcfcf'></div><div class='a' style='left:2px;top:220px;width:1382px;height:1px;background:#cfcfcf'></div><div class='a' style='left:2px;top:236px;width:1382px;height:1px;background:#cfcfcf'></div><div class='a' style='left:2px;top:252px;width:1382px;height:1px;background:#cfcfcf'></div><div class='a' style='left:2px;top:268px;width:1382px;height:1px;background:#cfcfcf'></div><div class='a' style='left:2px;top:284px;width:1382px;height:1px;background:#cfcfcf'></div><div class='a' style='left:2px;top:300px;width:1382px;height:1px;background:#cfcfcf'></div><div class='a' style='left:2px;top:316px;width:1382px;height:1px;background:#cfcfcf'></div><div class='a' style='left:2px;top:332px;width:1382px;height:1px;background:#cfcfcf'></div><div class='a' style='left:2px;top:348px;width:1382px;height:1px;background:#cfcfcf'></div><div class='a' style='left:2px;top:364px;width:1382px;height:1px;background:#cfcfcf'></div><div class='a' style='left:2px;top:380px;width:1382px;height:1px;background:#cfcfcf'></div><div class='a' style='left:2px;top:396px;width:1382px;height:1px;background:#cfcfcf'></div><div class='a' style='left:2px;top:412px;width:1382px;height:1px;background:#cfcfcf'></div><div class='a' style='left:2px;top:428px;width:1382px;height:1px;background:#cfcfcf'></div><div class='a' style='left:2px;top:444px;width:1382px;height:1px;background:#cfcfcf'></div><div class='a' style='left:2px;top:460px;width:1382px;height:1px;background:#cfcfcf'></div><div class='a' style='left:2px;top:476px;width:1382px;height:1px;background:#cfcfcf'></div><div class='a' style='left:2px;top:492px;width:1382px;height:1px;background:#cfcfcf'></div><div class='a' style='left:2px;top:508px;width:1382px;height:1px;background:#cfcfcf'></div><div class='a' style='left:2px;top:524px;width:1382px;height:1px;background:#cfcfcf'></div><div class='a' style='left:2px;top:540px;width:1382px;height:1px;background:#cfcfcf'></div><div class='a' style='left:2px;top:556px;width:1382px;height:1px;background:#cfcfcf'></div><div class='a' style='left:2px;top:572px;width:1382px;height:1px;background:#cfcfcf'></div><div class='a' style='left:2px;top:588px;width:1382px;height:1px;background:#cfcfcf'></div><div class='a' style='left:2px;top:604px;width:1382px;height:1px;background:#cfcfcf'></div><div class='a' style='left:2px;top:620px;width:1382px;height:1px;background:#cfcfcf'></div><div class='a' style='left:2px;top:636px;width:1382px;height:1px;background:#cfcfcf'></div><div class='a' style='left:2px;top:652px;width:1382px;height:1px;background:#cfcfcf'></div><div class='a' style='left:2px;top:668px;width:1382px;height:1px;background:#cfcfcf'></div><div class='a' style='left:2px;top:684px;width:1382px;height:1px;background:#cfcfcf'></div><div class='a' style='left:2px;top:700px;width:1382px;height:1px;background:#cfcfcf'></div><div class='a' style='left:2px;top:716px;width:1382px;height:1px;background:#cfcfcf'></div><div class='a' style='left:2px;top:732px;width:1382px;height:1px;background:#cfcfcf'></div><div class='a' style='left:2px;top:748px;width:1382px;height:1px;background:#cfcfcf'></div><div class='a' style='left:2px;top:764px;width:1382px;height:1px;background:#cfcfcf'></div><div class='a' style='left:2px;top:780px;width:1382px;height:1px;background:#cfcfcf'></div><div class='a' style='left:25px;top:189px;width:129px;height:585px;background:#c6c6c6'></div><div class='a' style='left:25px;top:189px;width:64px;height:15px;background:#fff'></div><div class='a' style='left:25px;top:204px;width:129px;height:1px;background:#ababab'></div><div class='a' style='left:25px;top:220px;width:129px;height:1px;background:#ababab'></div><div class='a' style='left:25px;top:236px;width:129px;height:1px;background:#ababab'></div><div class='a' style='left:25px;top:252px;width:129px;height:1px;background:#ababab'></div><div class='a' style='left:25px;top:268px;width:129px;height:1px;background:#ababab'></div><div class='a' style='left:25px;top:284px;width:129px;height:1px;background:#ababab'></div><div class='a' style='left:25px;top:300px;width:129px;height:1px;background:#ababab'></div><div class='a' style='left:25px;top:316px;width:129px;height:1px;background:#ababab'></div><div class='a' style='left:25px;top:332px;width:129px;height:1px;background:#ababab'></div><div class='a' style='left:25px;top:348px;width:129px;height:1px;background:#ababab'></div><div class='a' style='left:25px;top:364px;width:129px;height:1px;background:#ababab'></div><div class='a' style='left:25px;top:380px;width:129px;height:1px;background:#ababab'></div><div class='a' style='left:25px;top:396px;width:129px;height:1px;background:#ababab'></div><div class='a' style='left:25px;top:412px;width:129px;height:1px;background:#ababab'></div><div class='a' style='left:25px;top:428px;width:129px;height:1px;background:#ababab'></div><div class='a' style='left:25px;top:444px;width:129px;height:1px;background:#ababab'></div><div class='a' style='left:25px;top:460px;width:129px;height:1px;background:#ababab'></div><div class='a' style='left:25px;top:476px;width:129px;height:1px;background:#ababab'></div><div class='a' style='left:25px;top:492px;width:129px;height:1px;background:#ababab'></div><div class='a' style='left:25px;top:508px;width:129px;height:1px;background:#ababab'></div><div class='a' style='left:25px;top:524px;width:129px;height:1px;background:#ababab'></div><div class='a' style='left:25px;top:540px;width:129px;height:1px;background:#ababab'></div><div class='a' style='left:25px;top:556px;width:129px;height:1px;background:#ababab'></div><div class='a' style='left:25px;top:572px;width:129px;height:1px;background:#ababab'></div><div class='a' style='left:25px;top:588px;width:129px;height:1px;background:#ababab'></div><div class='a' style='left:25px;top:604px;width:129px;height:1px;background:#ababab'></div><div class='a' style='left:25px;top:620px;width:129px;height:1px;background:#ababab'></div><div class='a' style='left:25px;top:636px;width:129px;height:1px;background:#ababab'></div><div class='a' style='left:25px;top:652px;width:129px;height:1px;background:#ababab'></div><div class='a' style='left:25px;top:668px;width:129px;height:1px;background:#ababab'></div><div class='a' style='left:25px;top:684px;width:129px;height:1px;background:#ababab'></div><div class='a' style='left:25px;top:700px;width:129px;height:1px;background:#ababab'></div><div class='a' style='left:25px;top:716px;width:129px;height:1px;background:#ababab'></div><div class='a' style='left:25px;top:732px;width:129px;height:1px;background:#ababab'></div><div class='a' style='left:25px;top:748px;width:129px;height:1px;background:#ababab'></div><div class='a' style='left:25px;top:764px;width:129px;height:1px;background:#ababab'></div><div class='a' style='left:25px;top:780px;width:129px;height:1px;background:#ababab'></div><div class='a' style='left:89px;top:189px;width:1px;height:585px;background:#ababab'></div><div class='t' style='left:10.55px;top:192.19px;font-size:11px;font-weight:normal;font-style:normal;color:#1d6b3a;font-family:"Liberation Sans",sans-serif;letter-spacing:0.000px;-webkit-text-stroke:0.4px currentColor;'>1</div><div class='t' style='left:10.55px;top:208.19px;font-size:11px;font-weight:normal;font-style:normal;color:#1d6b3a;font-family:"Liberation Sans",sans-serif;letter-spacing:0.000px;-webkit-text-stroke:0.4px currentColor;'>2</div><div class='t' style='left:10.55px;top:224.19px;font-size:11px;font-weight:normal;font-style:normal;color:#1d6b3a;font-family:"Liberation Sans",sans-serif;letter-spacing:0.000px;-webkit-text-stroke:0.4px currentColor;'>3</div><div class='t' style='left:10.55px;top:240.19px;font-size:11px;font-weight:normal;font-style:normal;color:#1d6b3a;font-family:"Liberation Sans",sans-serif;letter-spacing:0.000px;-webkit-text-stroke:0.4px currentColor;'>4</div><div class='t' style='left:10.55px;top:256.19px;font-size:11px;font-weight:normal;font-style:normal;color:#1d6b3a;font-family:"Liberation Sans",sans-serif;letter-spacing:0.000px;-webkit-text-stroke:0.4px currentColor;'>5</div><div class='t' style='left:10.55px;top:272.19px;font-size:11px;font-weight:normal;font-style:normal;color:#1d6b3a;font-family:"Liberation Sans",sans-serif;letter-spacing:0.000px;-webkit-text-stroke:0.4px currentColor;'>6</div><div class='t' style='left:10.55px;top:288.19px;font-size:11px;font-weight:normal;font-style:normal;color:#1d6b3a;font-family:"Liberation Sans",sans-serif;letter-spacing:0.000px;-webkit-text-stroke:0.4px currentColor;'>7</div><div class='t' style='left:10.55px;top:304.19px;font-size:11px;font-weight:normal;font-style:normal;color:#1d6b3a;font-family:"Liberation Sans",sans-serif;letter-spacing:0.000px;-webkit-text-stroke:0.4px currentColor;'>8</div><div class='t' style='left:10.55px;top:320.19px;font-size:11px;font-weight:normal;font-style:normal;color:#1d6b3a;font-family:"Liberation Sans",sans-serif;letter-spacing:0.000px;-webkit-text-stroke:0.4px currentColor;'>9</div><div class='t' style='left:7.80px;top:336.19px;font-size:11px;font-weight:normal;font-style:normal;color:#1d6b3a;font-family:"Liberation Sans",sans-serif;letter-spacing:0.000px;-webkit-text-stroke:0.4px currentColor;'>10</div><div class='t' style='left:7.80px;top:352.19px;font-size:11px;font-weight:normal;font-style:normal;color:#1d6b3a;font-family:"Liberation Sans",sans-serif;letter-spacing:0.000px;-webkit-text-stroke:0.4px currentColor;'>11</div><div class='t' style='left:7.80px;top:368.19px;font-size:11px;font-weight:normal;font-style:normal;color:#1d6b3a;font-family:"Liberation Sans",sans-serif;letter-spacing:0.000px;-webkit-text-stroke:0.4px currentColor;'>12</div><div class='t' style='left:7.80px;top:384.19px;font-size:11px;font-weight:normal;font-style:normal;color:#1d6b3a;font-family:"Liberation Sans",sans-serif;letter-spacing:0.000px;-webkit-text-stroke:0.4px currentColor;'>13</div><div class='t' style='left:7.80px;top:400.19px;font-size:11px;font-weight:normal;font-style:normal;color:#1d6b3a;font-family:"Liberation Sans",sans-serif;letter-spacing:0.000px;-webkit-text-stroke:0.4px currentColor;'>14</div><div class='t' style='left:7.80px;top:416.19px;font-size:11px;font-weight:normal;font-style:normal;color:#1d6b3a;font-family:"Liberation Sans",sans-serif;letter-spacing:0.000px;-webkit-text-stroke:0.4px currentColor;'>15</div><div class='t' style='left:7.80px;top:432.19px;font-size:11px;font-weight:normal;font-style:normal;color:#1d6b3a;font-family:"Liberation Sans",sans-serif;letter-spacing:0.000px;-webkit-text-stroke:0.4px currentColor;'>16</div><div class='t' style='left:7.80px;top:448.19px;font-size:11px;font-weight:normal;font-style:normal;color:#1d6b3a;font-family:"Liberation Sans",sans-serif;letter-spacing:0.000px;-webkit-text-stroke:0.4px currentColor;'>17</div><div class='t' style='left:7.80px;top:464.19px;font-size:11px;font-weight:normal;font-style:normal;color:#1d6b3a;font-family:"Liberation Sans",sans-serif;letter-spacing:0.000px;-webkit-text-stroke:0.4px currentColor;'>18</div><div class='t' style='left:7.80px;top:480.19px;font-size:11px;font-weight:normal;font-style:normal;color:#1d6b3a;font-family:"Liberation Sans",sans-serif;letter-spacing:0.000px;-webkit-text-stroke:0.4px currentColor;'>19</div><div class='t' style='left:7.80px;top:496.19px;font-size:11px;font-weight:normal;font-style:normal;color:#1d6b3a;font-family:"Liberation Sans",sans-serif;letter-spacing:0.000px;-webkit-text-stroke:0.4px currentColor;'>20</div><div class='t' style='left:7.80px;top:512.19px;font-size:11px;font-weight:normal;font-style:normal;color:#1d6b3a;font-family:"Liberation Sans",sans-serif;letter-spacing:0.000px;-webkit-text-stroke:0.4px currentColor;'>21</div><div class='t' style='left:7.80px;top:528.19px;font-size:11px;font-weight:normal;font-style:normal;color:#1d6b3a;font-family:"Liberation Sans",sans-serif;letter-spacing:0.000px;-webkit-text-stroke:0.4px currentColor;'>22</div><div class='t' style='left:7.80px;top:544.19px;font-size:11px;font-weight:normal;font-style:normal;color:#1d6b3a;font-family:"Liberation Sans",sans-serif;letter-spacing:0.000px;-webkit-text-stroke:0.4px currentColor;'>23</div><div class='t' style='left:7.80px;top:560.19px;font-size:11px;font-weight:normal;font-style:normal;color:#1d6b3a;font-family:"Liberation Sans",sans-serif;letter-spacing:0.000px;-webkit-text-stroke:0.4px currentColor;'>24</div><div class='t' style='left:7.80px;top:576.19px;font-size:11px;font-weight:normal;font-style:normal;color:#1d6b3a;font-family:"Liberation Sans",sans-serif;letter-spacing:0.000px;-webkit-text-stroke:0.4px currentColor;'>25</div><div class='t' style='left:7.80px;top:592.19px;font-size:11px;font-weight:normal;font-style:normal;color:#1d6b3a;font-family:"Liberation Sans",sans-serif;letter-spacing:0.000px;-webkit-text-stroke:0.4px currentColor;'>26</div><div class='t' style='left:7.80px;top:608.19px;font-size:11px;font-weight:normal;font-style:normal;color:#1d6b3a;font-family:"Liberation Sans",sans-serif;letter-spacing:0.000px;-webkit-text-stroke:0.4px currentColor;'>27</div><div class='t' style='left:7.80px;top:624.19px;font-size:11px;font-weight:normal;font-style:normal;color:#1d6b3a;font-family:"Liberation Sans",sans-serif;letter-spacing:0.000px;-webkit-text-stroke:0.4px currentColor;'>28</div><div class='t' style='left:7.80px;top:640.19px;font-size:11px;font-weight:normal;font-style:normal;color:#1d6b3a;font-family:"Liberation Sans",sans-serif;letter-spacing:0.000px;-webkit-text-stroke:0.4px currentColor;'>29</div><div class='t' style='left:7.80px;top:656.19px;font-size:11px;font-weight:normal;font-style:normal;color:#1d6b3a;font-family:"Liberation Sans",sans-serif;letter-spacing:0.000px;-webkit-text-stroke:0.4px currentColor;'>30</div><div class='t' style='left:7.80px;top:672.19px;font-size:11px;font-weight:normal;font-style:normal;color:#1d6b3a;font-family:"Liberation Sans",sans-serif;letter-spacing:0.000px;-webkit-text-stroke:0.4px currentColor;'>31</div><div class='t' style='left:7.80px;top:688.19px;font-size:11px;font-weight:normal;font-style:normal;color:#1d6b3a;font-family:"Liberation Sans",sans-serif;letter-spacing:0.000px;-webkit-text-stroke:0.4px currentColor;'>32</div><div class='t' style='left:7.80px;top:704.19px;font-size:11px;font-weight:normal;font-style:normal;color:#1d6b3a;font-family:"Liberation Sans",sans-serif;letter-spacing:0.000px;-webkit-text-stroke:0.4px currentColor;'>33</div><div class='t' style='left:7.80px;top:720.19px;font-size:11px;font-weight:normal;font-style:normal;color:#1d6b3a;font-family:"Liberation Sans",sans-serif;letter-spacing:0.000px;-webkit-text-stroke:0.4px currentColor;'>34</div><div class='t' style='left:7.80px;top:736.19px;font-size:11px;font-weight:normal;font-style:normal;color:#1d6b3a;font-family:"Liberation Sans",sans-serif;letter-spacing:0.000px;-webkit-text-stroke:0.4px currentColor;'>35</div><div class='t' style='left:7.80px;top:752.19px;font-size:11px;font-weight:normal;font-style:normal;color:#1d6b3a;font-family:"Liberation Sans",sans-serif;letter-spacing:0.000px;-webkit-text-stroke:0.4px currentColor;'>36</div><div class='t' style='left:7.80px;top:768.19px;font-size:11px;font-weight:normal;font-style:normal;color:#1d6b3a;font-family:"Liberation Sans",sans-serif;letter-spacing:0.000px;-webkit-text-stroke:0.4px currentColor;'>37</div><div class='a' style='left:26px;top:189px;width:63px;height:15px;overflow:hidden'><div class='t' style='left:1.5px;top:2.81px;font-size:11px;color:#000'>mention_user_ids</div></div><div class='t' style='left:91px;top:191.81px;font-size:11px;color:#000'>user_id</div><div class='t' style='left:25px;top:207.81px;width:62px;text-align:right;font-size:10.5px;color:#000;-webkit-text-stroke:0.4px #000'>10012122</div><div class='t' style='left:89px;top:207.81px;width:63px;text-align:right;font-size:10.5px;color:#000;-webkit-text-stroke:0.4px #000'>4091823135</div><div class='t' style='left:25px;top:223.81px;width:62px;text-align:right;font-size:10.5px;color:#000;-webkit-text-stroke:0.4px #000'>212071519</div><div class='t' style='left:89px;top:223.81px;width:63px;text-align:right;font-size:10.5px;color:#000;-webkit-text-stroke:0.4px #000'>767760019</div><div class='t' style='left:25px;top:239.81px;width:62px;text-align:right;font-size:10.5px;color:#000;-webkit-text-stroke:0.4px #000'>8.2337E+17</div><div class='t' style='left:89px;top:239.81px;width:63px;text-align:right;font-size:10.5px;color:#000;-webkit-text-stroke:0.4px #000'>8.889E+17</div><div class='t' style='left:25px;top:255.81px;width:62px;text-align:right;font-size:10.5px;color:#000;-webkit-text-stroke:0.4px #000'>8.3703E+17</div><div class='t' style='left:89px;top:255.81px;width:63px;text-align:right;font-size:10.5px;color:#000;-webkit-text-stroke:0.4px #000'>8.2776E+17</div><div class='t' style='left:25px;top:271.81px;width:62px;text-align:right;font-size:10.5px;color:#000;-webkit-text-stroke:0.4px #000'>19568591</div><div class='t' style='left:89px;top:271.81px;width:63px;text-align:right;font-size:10.5px;color:#000;-webkit-text-stroke:0.4px #000'>388425535</div><div class='t' style='left:25px;top:287.81px;width:62px;text-align:right;font-size:10.5px;color:#000;-webkit-text-stroke:0.4px #000'>940368062</div><div class='t' style='left:89px;top:287.81px;width:63px;text-align:right;font-size:10.5px;color:#000;-webkit-text-stroke:0.4px #000'>760512895</div><div class='t' style='left:25px;top:303.81px;width:62px;text-align:right;font-size:10.5px;color:#000;-webkit-text-stroke:0.4px #000'>33884545</div><div class='t' style='left:89px;top:303.81px;width:63px;text-align:right;font-size:10.5px;color:#000;-webkit-text-stroke:0.4px #000'>8.994E+17</div><div class='t' style='left:25px;top:319.81px;width:62px;text-align:right;font-size:10.5px;color:#000;-webkit-text-stroke:0.4px #000'>33884545</div><div class='t' style='left:89px;top:319.81px;width:63px;text-align:right;font-size:10.5px;color:#000;-webkit-text-stroke:0.4px #000'>142734726</div><div class='t' style='left:25px;top:335.81px;width:62px;text-align:right;font-size:10.5px;color:#000;-webkit-text-stroke:0.4px #000'>8.3245E+17</div><div class='t' style='left:89px;top:335.81px;width:63px;text-align:right;font-size:10.5px;color:#000;-webkit-text-stroke:0.4px #000'>3756779414</div><div class='t' style='left:25px;top:351.81px;width:62px;text-align:right;font-size:10.5px;color:#000;-webkit-text-stroke:0.4px #000'>43967741</div><div class='t' style='left:89px;top:351.81px;width:63px;text-align:right;font-size:10.5px;color:#000;-webkit-text-stroke:0.4px #000'>2853852179</div><div class='t' style='left:25px;top:367.81px;width:62px;text-align:right;font-size:10.5px;color:#000;-webkit-text-stroke:0.4px #000'>181561712</div><div class='t' style='left:89px;top:367.81px;width:63px;text-align:right;font-size:10.5px;color:#000;-webkit-text-stroke:0.4px #000'>2962207079</div><div class='t' style='left:25px;top:383.81px;width:62px;text-align:right;font-size:10.5px;color:#000;-webkit-text-stroke:0.4px #000'>375721095</div><div class='t' style='left:89px;top:383.81px;width:63px;text-align:right;font-size:10.5px;color:#000;-webkit-text-stroke:0.4px #000'>1904550620</div><div class='t' style='left:25px;top:399.81px;width:62px;text-align:right;font-size:10.5px;color:#000;-webkit-text-stroke:0.4px #000'>37848583</div><div class='t' style='left:89px;top:399.81px;width:63px;text-align:right;font-size:10.5px;color:#000;-webkit-text-stroke:0.4px #000'>7.1185E+17</div><div class='t' style='left:25px;top:415.81px;width:62px;text-align:right;font-size:10.5px;color:#000;-webkit-text-stroke:0.4px #000'>2916376923</div><div class='t' style='left:89px;top:415.81px;width:63px;text-align:right;font-size:10.5px;color:#000;-webkit-text-stroke:0.4px #000'>15387750</div><div class='t' style='left:25px;top:431.81px;width:62px;text-align:right;font-size:10.5px;color:#000;-webkit-text-stroke:0.4px #000'>2421067430</div><div class='t' style='left:89px;top:431.81px;width:63px;text-align:right;font-size:10.5px;color:#000;-webkit-text-stroke:0.4px #000'>7.3002E+17</div><div class='t' style='left:25px;top:447.81px;width:62px;text-align:right;font-size:10.5px;color:#000;-webkit-text-stroke:0.4px #000'>57071060</div><div class='t' style='left:89px;top:447.81px;width:63px;text-align:right;font-size:10.5px;color:#000;-webkit-text-stroke:0.4px #000'>187403903</div><div class='t' style='left:25px;top:463.81px;width:62px;text-align:right;font-size:10.5px;color:#000;-webkit-text-stroke:0.4px #000'>44359264</div><div class='t' style='left:89px;top:463.81px;width:63px;text-align:right;font-size:10.5px;color:#000;-webkit-text-stroke:0.4px #000'>836623267</div><div class='t' style='left:25px;top:479.81px;width:62px;text-align:right;font-size:10.5px;color:#000;-webkit-text-stroke:0.4px #000'>18091904</div><div class='t' style='left:89px;top:479.81px;width:63px;text-align:right;font-size:10.5px;color:#000;-webkit-text-stroke:0.4px #000'>1570491258</div><div class='t' style='left:25px;top:495.81px;width:62px;text-align:right;font-size:10.5px;color:#000;-webkit-text-stroke:0.4px #000'>255059765</div><div class='t' style='left:89px;top:495.81px;width:63px;text-align:right;font-size:10.5px;color:#000;-webkit-text-stroke:0.4px #000'>518135043</div><div class='t' style='left:25px;top:511.81px;width:62px;text-align:right;font-size:10.5px;color:#000;-webkit-text-stroke:0.4px #000'>3230826850</div><div class='t' style='left:89px;top:511.81px;width:63px;text-align:right;font-size:10.5px;color:#000;-webkit-text-stroke:0.4px #000'>2970319119</div><div class='t' style='left:25px;top:527.81px;width:62px;text-align:right;font-size:10.5px;color:#000;-webkit-text-stroke:0.4px #000'>64035094</div><div class='t' style='left:89px;top:527.81px;width:63px;text-align:right;font-size:10.5px;color:#000;-webkit-text-stroke:0.4px #000'>2153060340</div><div class='t' style='left:25px;top:543.81px;width:62px;text-align:right;font-size:10.5px;color:#000;-webkit-text-stroke:0.4px #000'>759251</div><div class='t' style='left:89px;top:543.81px;width:63px;text-align:right;font-size:10.5px;color:#000;-webkit-text-stroke:0.4px #000'>428897370</div><div class='t' style='left:25px;top:559.81px;width:62px;text-align:right;font-size:10.5px;color:#000;-webkit-text-stroke:0.4px #000'>166751745</div><div class='t' style='left:89px;top:559.81px;width:63px;text-align:right;font-size:10.5px;color:#000;-webkit-text-stroke:0.4px #000'>21432180</div><div class='t' style='left:25px;top:575.81px;width:62px;text-align:right;font-size:10.5px;color:#000;-webkit-text-stroke:0.4px #000'>166751745</div><div class='t' style='left:89px;top:575.81px;width:63px;text-align:right;font-size:10.5px;color:#000;-webkit-text-stroke:0.4px #000'>332492322</div><div class='t' style='left:25px;top:591.81px;width:62px;text-align:right;font-size:10.5px;color:#000;-webkit-text-stroke:0.4px #000'>25053299</div><div class='t' style='left:89px;top:591.81px;width:63px;text-align:right;font-size:10.5px;color:#000;-webkit-text-stroke:0.4px #000'>472832711</div><div class='t' style='left:25px;top:607.81px;width:62px;text-align:right;font-size:10.5px;color:#000;-webkit-text-stroke:0.4px #000'>20642310</div><div class='t' style='left:89px;top:607.81px;width:63px;text-align:right;font-size:10.5px;color:#000;-webkit-text-stroke:0.4px #000'>4492879574</div><div class='t' style='left:25px;top:623.81px;width:62px;text-align:right;font-size:10.5px;color:#000;-webkit-text-stroke:0.4px #000'>428333</div><div class='t' style='left:89px;top:623.81px;width:63px;text-align:right;font-size:10.5px;color:#000;-webkit-text-stroke:0.4px #000'>250185664</div><div class='t' style='left:25px;top:639.81px;width:62px;text-align:right;font-size:10.5px;color:#000;-webkit-text-stroke:0.4px #000'>1004686760</div><div class='t' style='left:89px;top:639.81px;width:63px;text-align:right;font-size:10.5px;color:#000;-webkit-text-stroke:0.4px #000'>8.6674E+17</div><div class='t' style='left:25px;top:655.81px;width:62px;text-align:right;font-size:10.5px;color:#000;-webkit-text-stroke:0.4px #000'>28785486</div><div class='t' style='left:89px;top:655.81px;width:63px;text-align:right;font-size:10.5px;color:#000;-webkit-text-stroke:0.4px #000'>8.3306E+17</div><div class='t' style='left:25px;top:671.81px;width:62px;text-align:right;font-size:10.5px;color:#000;-webkit-text-stroke:0.4px #000'>111400999</div><div class='t' style='left:89px;top:671.81px;width:63px;text-align:right;font-size:10.5px;color:#000;-webkit-text-stroke:0.4px #000'>1405976227</div><div class='t' style='left:25px;top:687.81px;width:62px;text-align:right;font-size:10.5px;color:#000;-webkit-text-stroke:0.4px #000'>759251</div><div class='t' style='left:89px;top:687.81px;width:63px;text-align:right;font-size:10.5px;color:#000;-webkit-text-stroke:0.4px #000'>384002836</div><div class='t' style='left:25px;top:703.81px;width:62px;text-align:right;font-size:10.5px;color:#000;-webkit-text-stroke:0.4px #000'>1367531</div><div class='t' style='left:89px;top:703.81px;width:63px;text-align:right;font-size:10.5px;color:#000;-webkit-text-stroke:0.4px #000'>8.6979E+17</div><div class='t' style='left:25px;top:719.81px;width:62px;text-align:right;font-size:10.5px;color:#000;-webkit-text-stroke:0.4px #000'>169805100</div><div class='t' style='left:89px;top:719.81px;width:63px;text-align:right;font-size:10.5px;color:#000;-webkit-text-stroke:0.4px #000'>216200767</div><div class='t' style='left:25px;top:735.81px;width:62px;text-align:right;font-size:10.5px;color:#000;-webkit-text-stroke:0.4px #000'>714497616</div><div class='t' style='left:89px;top:735.81px;width:63px;text-align:right;font-size:10.5px;color:#000;-webkit-text-stroke:0.4px #000'>384298331</div><div class='t' style='left:25px;top:751.81px;width:62px;text-align:right;font-size:10.5px;color:#000;-webkit-text-stroke:0.4px #000'>219041453</div><div class='t' style='left:89px;top:751.81px;width:63px;text-align:right;font-size:10.5px;color:#000;-webkit-text-stroke:0.4px #000'>2773494490</div><div class='t' style='left:25px;top:767.81px;width:62px;text-align:right;font-size:10.5px;color:#000;-webkit-text-stroke:0.4px #000'>94581061</div><div class='t' style='left:89px;top:767.81px;width:63px;text-align:right;font-size:10.5px;color:#000;-webkit-text-stroke:0.4px #000'>3516909376</div><div class='a' style='left:23px;top:187px;width:133px;height:2px;background:#17703f'></div><div class='a' style='left:23px;top:187px;width:2px;height:600px;background:#17703f'></div><div class='a' style='left:154px;top:187px;width:2px;height:600px;background:#17703f'></div><div class='a' style='left:152px;top:187px;width:6px;height:6px;background:#17703f;border:1px solid #fff'></div>

<div class='a' style='left:0;top:774px;width:1384px;height:26px;background:#efefef;border-top:1px solid #d0d0d0'></div>
<svg class='a' style='left:16px;top:782px' width='8' height='11' viewBox='0 0 8 11'><path d='M7 0.5 V10.5 L1 5.5 Z' fill='#bdbdbd'/></svg>
<svg class='a' style='left:39px;top:782px' width='8' height='11' viewBox='0 0 8 11'><path d='M1 0.5 V10.5 L7 5.5 Z' fill='#bdbdbd'/></svg>
<div class='a' style='left:63px;top:774px;width:95px;height:22px;background:#fff;border-radius:0 0 3px 3px;box-shadow:0 1px 1.5px rgba(0,0,0,0.3)'></div>
<div class='t' style='left:79.70px;top:780.64px;font-size:12px;font-weight:normal;font-style:normal;color:#1e7d46;font-family:"Liberation Sans",sans-serif;letter-spacing:0.173px;-webkit-text-stroke:0.55px currentColor;'>edges1000</div>
<svg class='a' style='left:171px;top:780px' width='13' height='13' viewBox='0 0 13 13'><path d='M6.5 1.5 V11.5 M1.5 6.5 H11.5' stroke='#444' stroke-width='1.6'/></svg>
<div class='a' style='left:196px;top:776px;width:1px;height:19px;background:#d0d0d0'></div>


<div class='a' style='left:0;top:800px;width:1384px;height:1px;background:#a3a3a3'></div>
<div class='a' style='left:0;top:801px;width:1384px;height:23px;background:linear-gradient(#e2e2e2,#d6d6d6)'></div>
<div class='t' style='left:26.60px;top:805.64px;font-size:12px;font-weight:normal;font-style:normal;color:#4a4a4a;font-family:"Liberation Sans",sans-serif;letter-spacing:-0.147px;-webkit-text-stroke:0.12px currentColor;'>Ready</div>
<div class='t' style='left:707.80px;top:806.14px;font-size:12px;font-weight:normal;font-style:normal;color:#333;font-family:"Liberation Sans",sans-serif;letter-spacing:0.021px;-webkit-text-stroke:0.12px currentColor;'>Average: 1.02736E+17</div>
<div class='t' style='left:854.00px;top:806.14px;font-size:12px;font-weight:normal;font-style:normal;color:#333;font-family:"Liberation Sans",sans-serif;letter-spacing:0.399px;-webkit-text-stroke:0.12px currentColor;'>Count: 2002</div>
<div class='t' style='left:945.80px;top:806.14px;font-size:12px;font-weight:normal;font-style:normal;color:#333;font-family:"Liberation Sans",sans-serif;letter-spacing:0.306px;-webkit-text-stroke:0.12px currentColor;'>Sum: 2.05472E+20</div>
<div class='a' style='left:1065px;top:801px;width:37px;height:21px;background:#a8a8a8'></div>
<svg class='a' style='left:1076px;top:804px' width='15' height='15' viewBox='0 0 15 15'><path d='M1.5 1.5 H13.5 V13.5 H1.5 Z M1.5 5.5 H13.5 M1.5 9.5 H13.5 M5.5 1.5 V13.5 M9.5 1.5 V13.5' fill='none' stroke='#fff' stroke-width='1.2'/></svg>
<svg class='a' style='left:1111px;top:804px' width='16' height='15' viewBox='0 0 16 15'><path d='M1.5 1.5 H14.5 V13.5 H1.5 Z M4 4 H12 V11 H4 Z M6 6 H10 M6 7.8 H10 M6 9.5 H10' fill='none' stroke='#555' stroke-width='1'/></svg>
<svg class='a' style='left:1147px;top:804px' width='16' height='15' viewBox='0 0 16 15'><path d='M1.5 1.5 H14.5 V13.5 H1.5 Z M6 1.5 V8.5 H10 V1.5' fill='none' stroke='#555' stroke-width='1.2'/></svg>
<div class='a' style='left:1181px;top:811px;width:8px;height:2px;background:#555'></div>
<div class='a' style='left:1196px;top:810px;width:100px;height:3.3px;border-radius:2px;background:#9e9e9e'></div>
<div class='a' style='left:1238px;top:803px;width:16px;height:16px;border-radius:8px;background:#fff;box-shadow:0 0.5px 2px rgba(0,0,0,0.35)'></div>
<svg class='a' style='left:1302px;top:806px' width='11' height='11' viewBox='0 0 11 11'><path d='M5.5 1 V10 M1 5.5 H10' stroke='#555' stroke-width='1.8'/></svg>
<div class='t' style='left:1328.00px;top:806.14px;font-size:12px;font-weight:normal;font-style:normal;color:#333;font-family:"Liberation Sans",sans-serif;letter-spacing:0.093px;-webkit-text-stroke:0.12px currentColor;'>100%</div>

<div class='a' style='left:688.5px;top:94px;width:202.5px;height:456px;border-radius:8px;background:#e3e4e8;box-shadow:0 0 0 0.5px rgba(0,0,0,0.18),0 4px 12px rgba(0,0,0,0.12)'></div><div class='t' style='left:729.70px;top:104.87px;font-size:13.5px;font-weight:normal;font-style:normal;color:#1e1e1e;font-family:"Liberation Sans",sans-serif;letter-spacing:0.129px;-webkit-text-stroke:0.15px currentColor;'>General</div><div class='t' style='left:729.70px;top:120.89px;font-size:11px;font-weight:normal;font-style:normal;color:#7f7f7f;font-family:"Liberation Sans",sans-serif;letter-spacing:0.431px;-webkit-text-stroke:0.2px currentColor;'>No specific format</div><div class='t' style='left:728.70px;top:141.77px;font-size:13.5px;font-weight:normal;font-style:normal;color:#1e1e1e;font-family:"Liberation Sans",sans-serif;letter-spacing:0.656px;-webkit-text-stroke:0.15px currentColor;'>Number</div><div class='t' style='left:729.70px;top:158.09px;font-size:11px;font-weight:normal;font-style:normal;color:#7f7f7f;font-family:"Liberation Sans",sans-serif;letter-spacing:0.278px;-webkit-text-stroke:0.2px currentColor;'>mention_user_ids</div><div class='t' style='left:729.70px;top:178.77px;font-size:13.5px;font-weight:normal;font-style:normal;color:#1e1e1e;font-family:"Liberation Sans",sans-serif;letter-spacing:0.441px;-webkit-text-stroke:0.15px currentColor;'>Currency</div><div class='t' style='left:729.70px;top:195.09px;font-size:11px;font-weight:normal;font-style:normal;color:#7f7f7f;font-family:"Liberation Sans",sans-serif;letter-spacing:0.278px;-webkit-text-stroke:0.2px currentColor;'>mention_user_ids</div><div class='t' style='left:729.80px;top:216.17px;font-size:13.5px;font-weight:normal;font-style:normal;color:#1e1e1e;font-family:"Liberation Sans",sans-serif;letter-spacing:0.613px;-webkit-text-stroke:0.15px currentColor;'>Accounting</div><div class='t' style='left:732.60px;top:231.89px;font-size:11px;font-weight:normal;font-style:normal;color:#7f7f7f;font-family:"Liberation Sans",sans-serif;letter-spacing:0.311px;-webkit-text-stroke:0.2px currentColor;'>mention_user_ids</div><div class='t' style='left:741.60px;top:252.87px;font-size:13.5px;font-weight:normal;font-style:normal;color:#1e1e1e;font-family:"Liberation Sans",sans-serif;letter-spacing:0.486px;-webkit-text-stroke:0.15px currentColor;'>Short Date</div><div class='t' style='left:741.60px;top:268.89px;font-size:11px;font-weight:normal;font-style:normal;color:#7f7f7f;font-family:"Liberation Sans",sans-serif;letter-spacing:0.271px;-webkit-text-stroke:0.2px currentColor;'>mention_user_ids</div><div class='t' style='left:740.60px;top:290.57px;font-size:13.5px;font-weight:normal;font-style:normal;color:#1e1e1e;font-family:"Liberation Sans",sans-serif;letter-spacing:0.514px;-webkit-text-stroke:0.15px currentColor;'>Long Date</div><div class='t' style='left:741.60px;top:306.49px;font-size:11px;font-weight:normal;font-style:normal;color:#7f7f7f;font-family:"Liberation Sans",sans-serif;letter-spacing:0.271px;-webkit-text-stroke:0.2px currentColor;'>mention_user_ids</div><div class='t' style='left:728.00px;top:329.27px;font-size:13.5px;font-weight:normal;font-style:normal;color:#1e1e1e;font-family:"Liberation Sans",sans-serif;letter-spacing:0.337px;-webkit-text-stroke:0.15px currentColor;'>Time</div><div class='t' style='left:728.00px;top:344.69px;font-size:11px;font-weight:normal;font-style:normal;color:#7f7f7f;font-family:"Liberation Sans",sans-serif;letter-spacing:0.231px;-webkit-text-stroke:0.2px currentColor;'>mention_user_ids</div><div class='t' style='left:728.40px;top:365.97px;font-size:13.5px;font-weight:normal;font-style:normal;color:#1e1e1e;font-family:"Liberation Sans",sans-serif;letter-spacing:0.562px;-webkit-text-stroke:0.15px currentColor;'>Percentage</div><div class='t' style='left:729.40px;top:381.29px;font-size:11px;font-weight:normal;font-style:normal;color:#7f7f7f;font-family:"Liberation Sans",sans-serif;letter-spacing:0.251px;-webkit-text-stroke:0.2px currentColor;'>mention_user_ids</div><div class='t' style='left:728.40px;top:402.77px;font-size:13.5px;font-weight:normal;font-style:normal;color:#1e1e1e;font-family:"Liberation Sans",sans-serif;letter-spacing:0.692px;-webkit-text-stroke:0.15px currentColor;'>Fraction</div><div class='t' style='left:729.40px;top:418.09px;font-size:11px;font-weight:normal;font-style:normal;color:#7f7f7f;font-family:"Liberation Sans",sans-serif;letter-spacing:0.251px;-webkit-text-stroke:0.2px currentColor;'>mention_user_ids</div><div class='t' style='left:729.50px;top:439.77px;font-size:13.5px;font-weight:normal;font-style:normal;color:#1e1e1e;font-family:"Liberation Sans",sans-serif;letter-spacing:0.537px;-webkit-text-stroke:0.15px currentColor;'>Scientific</div><div class='t' style='left:729.50px;top:456.29px;font-size:11px;font-weight:normal;font-style:normal;color:#7f7f7f;font-family:"Liberation Sans",sans-serif;letter-spacing:0.245px;-webkit-text-stroke:0.2px currentColor;'>mention_user_ids</div><div class='t' style='left:729.50px;top:476.97px;font-size:13.5px;font-weight:normal;font-style:normal;color:#1e1e1e;font-family:"Liberation Sans",sans-serif;letter-spacing:0.231px;-webkit-text-stroke:0.15px currentColor;'>Text</div><div class='t' style='left:729.50px;top:492.59px;font-size:11px;font-weight:normal;font-style:normal;color:#7f7f7f;font-family:"Liberation Sans",sans-serif;letter-spacing:0.245px;-webkit-text-stroke:0.2px currentColor;'>mention_user_ids</div><div class='a' style='left:703px;top:513px;width:174px;height:1px;background:#c9c9cc'></div><div class='t' style='left:728.50px;top:525.99px;font-size:13px;font-weight:normal;font-style:normal;color:#1e1e1e;font-family:"Liberation Sans",sans-serif;letter-spacing:0.282px;-webkit-text-stroke:0.15px currentColor;'>More Number Formats...</div><div class='t' style='left:704.40px;top:108.49px;font-size:9.7px;font-weight:normal;font-style:normal;color:#333;font-family:"Liberation Sans",sans-serif;letter-spacing:0.000px;transform:scaleX(0.8683);transform-origin:0.00px 0;-webkit-text-stroke:0px currentColor;'>ABC</div><div class='t' style='left:705.00px;top:117.59px;font-size:9.7px;font-weight:normal;font-style:normal;color:#333;font-family:"Liberation Sans",sans-serif;letter-spacing:0.000px;transform:scaleX(1.0016);transform-origin:0.00px 0;-webkit-text-stroke:0px currentColor;'>123</div><div class='t' style='left:702.40px;top:148.27px;font-size:13.5px;font-weight:normal;font-style:normal;color:#333;font-family:"Liberation Sans",sans-serif;letter-spacing:0.000px;transform:scaleX(0.9136);transform-origin:1.00px 0;-webkit-text-stroke:0.15px currentColor;'>123</div><svg class='a' style='left:700px;top:180px' width='26' height='24' viewBox='0 0 26 24'><path d='M11.200000000000001 12.9 V15.02 A5.4 2.4 0 0 0 22.0 15.02 V12.9 Z' fill='#b07a1c' stroke='#7a4e0a' stroke-width='0.7'/><ellipse cx='16.6' cy='12.9' rx='5.4' ry='2.4' fill='#f0c04a' stroke='#8a5a10' stroke-width='0.7'/><path d='M11.200000000000001 10.3 V12.42 A5.4 2.4 0 0 0 22.0 12.42 V10.3 Z' fill='#b07a1c' stroke='#7a4e0a' stroke-width='0.7'/><ellipse cx='16.6' cy='10.3' rx='5.4' ry='2.4' fill='#f0c04a' stroke='#8a5a10' stroke-width='0.7'/><path d='M11.200000000000001 7.700000000000001 V9.82 A5.4 2.4 0 0 0 22.0 9.82 V7.700000000000001 Z' fill='#b07a1c' stroke='#7a4e0a' stroke-width='0.7'/><ellipse cx='16.6' cy='7.700000000000001' rx='5.4' ry='2.4' fill='#f0c04a' stroke='#8a5a10' stroke-width='0.7'/><path d='M4.0 15.9 V18.02 A5.4 2.4 0 0 0 14.8 18.02 V15.9 Z' fill='#b07a1c' stroke='#7a4e0a' stroke-width='0.7'/><ellipse cx='9.4' cy='15.9' rx='5.4' ry='2.4' fill='#f0c04a' stroke='#8a5a10' stroke-width='0.7'/><path d='M4.0 13.3 V15.42 A5.4 2.4 0 0 0 14.8 15.42 V13.3 Z' fill='#b07a1c' stroke='#7a4e0a' stroke-width='0.7'/><ellipse cx='9.4' cy='13.3' rx='5.4' ry='2.4' fill='#f0c04a' stroke='#8a5a10' stroke-width='0.7'/></svg><svg class='a' style='left:700px;top:218px' width='26' height='22' viewBox='0 0 26 22'>
<rect x='11.7' y='3.8' width='10' height='12.7' rx='1' fill='#fafafa' stroke='#999' stroke-width='0.8'/>
<rect x='13' y='5.2' width='7.5' height='1.6' fill='#2a6fc0'/>
<path d='M13 8.8 H20.5 M13 10.8 H20.5 M13 12.8 H20.5 M13 14.6 H20.5' stroke='#9a9a9a' stroke-width='0.7' stroke-dasharray='1 0.9'/>
<path d='M4.0 14.9 V17.02 A5.4 2.4 0 0 0 14.8 17.02 V14.9 Z' fill='#b07a1c' stroke='#7a4e0a' stroke-width='0.7'/><ellipse cx='9.4' cy='14.9' rx='5.4' ry='2.4' fill='#f0c04a' stroke='#8a5a10' stroke-width='0.7'/><path d='M4.0 12.3 V14.42 A5.4 2.4 0 0 0 14.8 14.42 V12.3 Z' fill='#b07a1c' stroke='#7a4e0a' stroke-width='0.7'/><ellipse cx='9.4' cy='12.3' rx='5.4' ry='2.4' fill='#f0c04a' stroke='#8a5a10' stroke-width='0.7'/></svg><svg class='a' style='left:700px;top:248px' width='36' height='36' viewBox='0 0 36 36'>
<rect x='6.7' y='6.7' width='24.6' height='23.6' fill='#fcfcfc' stroke='#8a8a8a' stroke-width='1'/>
<rect x='6.2' y='6.2' width='25.6' height='4.3' fill='#7d7d7f'/>
<path d='M7 15.3 H31 M7 20.5 H31 M7 25.4 H31 M11.4 10.5 V30 M16.5 10.5 V30 M21.5 10.5 V30 M26.4 10.5 V30' stroke='#cfcfcf' stroke-width='0.9'/>
<circle cx='8.9' cy='7.9' r='5.7' fill='#3d8b3d' stroke='#2c6e2c' stroke-width='0.8'/>
<path d='M8.9 4.9 V10.9 M5.9 7.9 H11.9' stroke='#fff' stroke-width='2.1'/>
<circle cx='27.1' cy='25.4' r='6.9' fill='#fff' stroke='#2c6fc2' stroke-width='1.9'/>
<path d='M26.3 21 V26.4 H30.5' fill='none' stroke='#3a3a3a' stroke-width='1.7'/>
</svg><svg class='a' style='left:700px;top:286px' width='36' height='36' viewBox='0 0 36 36'>
<rect x='6.7' y='6.7' width='24.6' height='23.6' fill='#fcfcfc' stroke='#8a8a8a' stroke-width='1'/>
<rect x='6.2' y='6.2' width='25.6' height='4.3' fill='#7d7d7f'/>
<path d='M7 15.3 H31 M7 20.5 H31 M7 25.4 H31 M11.4 10.5 V30 M16.5 10.5 V30 M21.5 10.5 V30 M26.4 10.5 V30' stroke='#cfcfcf' stroke-width='0.9'/>
<circle cx='8.9' cy='7.9' r='5.7' fill='#3d8b3d' stroke='#2c6e2c' stroke-width='0.8'/>
<path d='M8.9 4.9 V10.9 M5.9 7.9 H11.9' stroke='#fff' stroke-width='2.1'/>
<circle cx='27.1' cy='25.4' r='6.9' fill='#fff' stroke='#2c6fc2' stroke-width='1.9'/>
<path d='M26.3 21 V26.4 H30.5' fill='none' stroke='#3a3a3a' stroke-width='1.7'/>
</svg><svg class='a' style='left:702px;top:332px' width='20' height='20' viewBox='0 0 20 20'>
<circle cx='10' cy='10' r='6.9' fill='#fff' stroke='#2c6fc2' stroke-width='1.9'/>
<path d='M9.2 5.8 V10.8 H13' fill='none' stroke='#3a3a3a' stroke-width='1.6'/></svg><svg class='a' style='left:704px;top:370px' width='18' height='18' viewBox='0 0 18 18'>
<ellipse cx='5.8' cy='6.3' rx='2.2' ry='2.3' fill='none' stroke='#333' stroke-width='1.3'/>
<ellipse cx='12.5' cy='12.6' rx='2.3' ry='2.4' fill='none' stroke='#333' stroke-width='1.3'/>
<path d='M13.2 3.2 L5.2 15.2' stroke='#333' stroke-width='1.2'/></svg><svg class='a' style='left:704px;top:406px' width='18' height='20' viewBox='0 0 18 20'>
<path d='M3.2 3.5 L5.3 2.3 V9.7' fill='none' stroke='#333' stroke-width='1.2'/>
<path d='M12.9 3.1 L5.3 16.7' stroke='#333' stroke-width='1.2'/>
<path d='M9.6 12.2 Q10.2 10.5 12.6 10.5 Q15.2 10.6 15.2 12.7 Q15.1 14.3 9.3 17.9 H16.2' fill='none' stroke='#333' stroke-width='1.2'/></svg><div class='t' style='left:703.70px;top:447.79px;font-size:13px;font-weight:normal;font-style:normal;color:#333;font-family:"Liberation Sans",sans-serif;letter-spacing:0.000px;transform:scaleX(0.9698);transform-origin:0.00px 0;-webkit-text-stroke:0.15px currentColor;'>10</div><div class='t' style='left:718.70px;top:447.87px;font-size:7px;font-weight:normal;font-style:normal;color:#333;font-family:"Liberation Sans",sans-serif;letter-spacing:0.000px;-webkit-text-stroke:0.15px currentColor;'>2</div><div class='t' style='left:703.00px;top:484.81px;font-size:10.5px;font-weight:normal;font-style:normal;color:#333;font-family:"Liberation Sans",sans-serif;letter-spacing:0.000px;transform:scaleX(0.9270);transform-origin:0.00px 0;-webkit-text-stroke:0.05px currentColor;'>ABC</div>
</div>
</body></html>
